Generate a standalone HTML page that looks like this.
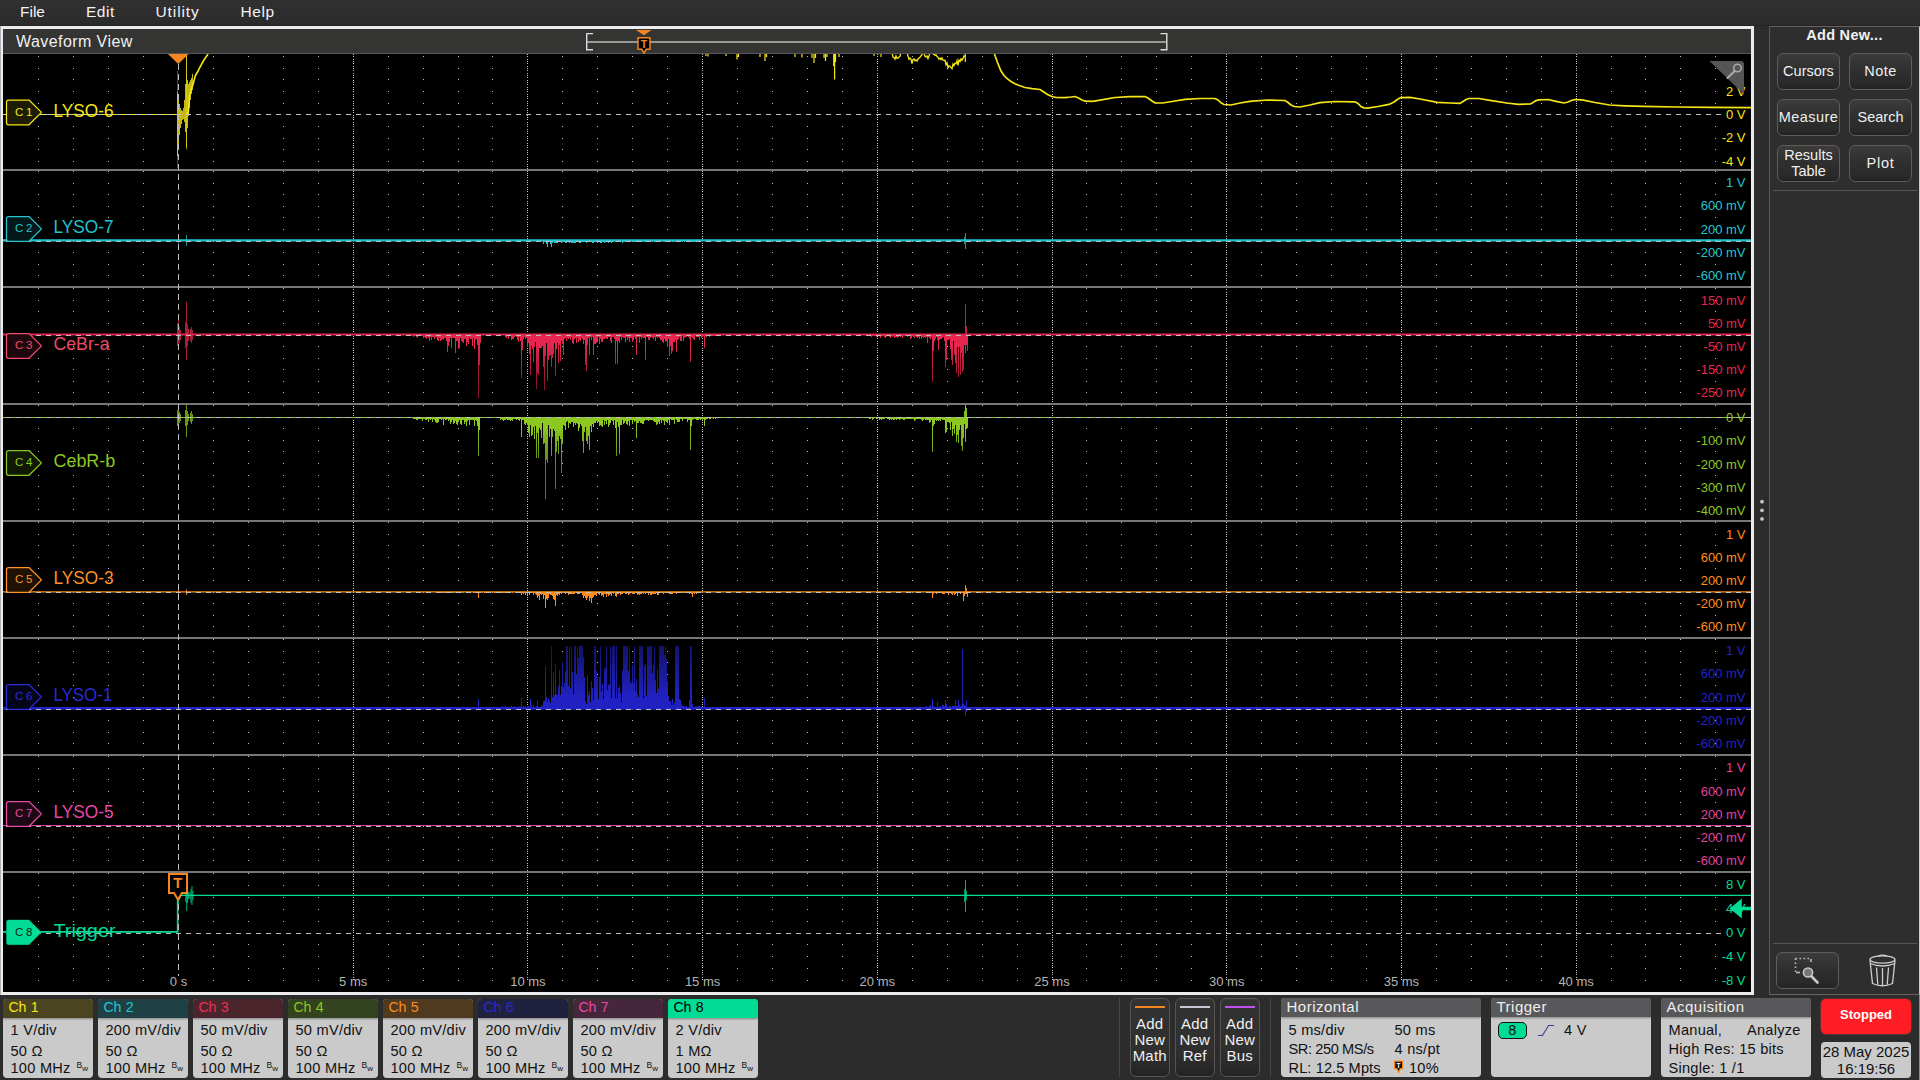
<!DOCTYPE html>
<html><head><meta charset="utf-8"><title>Waveform View</title>
<style>
html,body{margin:0;padding:0}
body{width:1920px;height:1080px;overflow:hidden;background:#2c2c2c;font-family:"Liberation Sans",sans-serif;position:relative;color:#eee}
.abs{position:absolute}
#menubar{left:0;top:0;width:1920px;height:26px;background:linear-gradient(#303030,#2b2b2b);border-bottom:1px solid #242424;box-sizing:border-box}
#menubar span{position:absolute;top:2.5px;font-size:15.5px;color:#f2f2f2;letter-spacing:.4px}
#wvframe{left:0;top:26px;width:1754px;height:969px;background:#ececee;border-left:1px solid #aeb0b6;box-sizing:border-box}
#wvtitle{left:3px;top:29px;width:1748px;height:25px;background:#343433;border-bottom:1px solid #58585a;box-sizing:border-box}
#wvtitle span{position:absolute;left:13px;top:3.5px;font-size:16px;color:#f0f0f0;letter-spacing:.43px}
#plot{left:3px;top:54px;width:1748px;height:938px;background:#000}
#side{left:1769px;top:26px;width:151px;height:969px;background:#2e2e2e;border:1px solid #6a625c;border-left-color:#5a5856;border-right-color:#cfcbc8;box-sizing:border-box}
.btn{position:absolute;box-sizing:border-box;border:1px solid #625b56;border-radius:6px;background:linear-gradient(#3c3c3c 0%,#2f2f2f 45%,#2a2a2a 85%,#222 100%);color:#f0f0f0;font-size:14.5px;text-align:center;letter-spacing:0}
.sep{position:absolute;left:1773px;width:144px;height:1px;background:#5a5450}
.chb{position:absolute;top:999px;width:90px;height:78.5px;background:#cacaca;border-radius:4px;overflow:hidden;color:#111;font-size:14.6px;letter-spacing:.25px}
.chh{position:absolute;left:0;top:0;width:90px;height:18.5px;box-sizing:border-box;padding-left:5.5px;font-size:14.2px;line-height:17px;letter-spacing:-.35px;word-spacing:1.3px;box-shadow:0 1px 2px rgba(0,0,0,.35)}
.r{position:absolute;left:7.5px;white-space:nowrap;line-height:16px}
.r1{top:23.2px}.r2{top:43.5px}.r3{top:61px}
.bw{position:absolute;left:73.5px;top:60.5px;font-size:8.5px;line-height:10px;letter-spacing:0}
.bw span{position:relative;top:3px;font-size:8px}
.pan{position:absolute;top:998px;height:79px;background:#cacaca;border-radius:4px;overflow:hidden;color:#111;font-size:14.6px;letter-spacing:.25px}
.ph{position:absolute;left:0;top:0;right:0;height:18.5px;background:#58585a;color:#eee;padding-left:5.5px;line-height:18px;font-size:15px;letter-spacing:.5px;box-shadow:0 1px 2px rgba(0,0,0,.35)}
.pan .t{position:absolute;white-space:nowrap;line-height:16px}
.addb{position:absolute;top:998px;width:39.5px;height:78.5px;box-sizing:border-box;border:1px solid #5a5450;border-radius:6px;background:linear-gradient(#333 0%,#2e2e2e 75%,#242424 100%);color:#f0f0f0;font-size:15px;line-height:16px;text-align:center;padding-top:17px;letter-spacing:.2px}
.addb i{position:absolute;left:4px;right:4px;top:7px;height:2px;display:block}
.vsep{position:absolute;top:998px;width:1px;height:79px;background:#4a4643}
</style></head><body>
<div id="menubar" class="abs"><span style="left:20px;letter-spacing:0">File</span><span style="left:86px;letter-spacing:.5px">Edit</span><span style="left:155.5px;letter-spacing:.9px">Utility</span><span style="left:240.5px;letter-spacing:.6px">Help</span></div>
<div id="wvframe" class="abs"></div>
<div id="wvtitle" class="abs"><span>Waveform View</span></div>
<div id="plot" class="abs"></div>
<svg class="abs" style="left:0;top:0" width="1920" height="1080" viewBox="0 0 1920 1080">
<g id="ruler" fill="none" stroke="#ddd" stroke-width="1.4"><path d="M593 33.6H586.7V49.8H593M1160.5 33.6H1166.8V49.8H1160.5"/><path d="M587 42H1166.5" stroke="#bbb" stroke-width="1.6"/></g>
<polygon points="636,30 651.5,30 643.8,35.3" fill="#f5861f"/>
<path d="M638 37.8H650V49.2H646.3L644 53.2L641.7 49.2H638Z" fill="#000" stroke="#f5861f" stroke-width="1.5" stroke-linejoin="round"/>
<text x="644" y="47.6" font-family="Liberation Sans, sans-serif" font-size="10.5" font-weight="bold" fill="#f5861f" text-anchor="middle">T</text>
<clipPath id="pc"><rect x="3" y="54" width="1748" height="938"/></clipPath>
<g clip-path="url(#pc)">
<defs><linearGradient id="g0" gradientUnits="userSpaceOnUse" x1="0" y1="241" x2="0" y2="251"><stop offset="0" stop-color="#22c5d0"/><stop offset="0.18" stop-color="#22c5d0"/><stop offset="1" stop-color="#22c5d0"/></linearGradient><linearGradient id="g1" gradientUnits="userSpaceOnUse" x1="0" y1="335" x2="0" y2="387"><stop offset="0" stop-color="#e8254e"/><stop offset="0.18" stop-color="#e8254e"/><stop offset="1" stop-color="#8a1430"/></linearGradient><linearGradient id="g2" gradientUnits="userSpaceOnUse" x1="0" y1="335" x2="0" y2="387"><stop offset="0" stop-color="#e8254e"/><stop offset="0.18" stop-color="#e8254e"/><stop offset="1" stop-color="#8a1430"/></linearGradient><linearGradient id="g3" gradientUnits="userSpaceOnUse" x1="0" y1="418" x2="0" y2="470"><stop offset="0" stop-color="#8cc820"/><stop offset="0.18" stop-color="#8cc820"/><stop offset="1" stop-color="#55800f"/></linearGradient><linearGradient id="g4" gradientUnits="userSpaceOnUse" x1="0" y1="418" x2="0" y2="470"><stop offset="0" stop-color="#8cc820"/><stop offset="0.18" stop-color="#8cc820"/><stop offset="1" stop-color="#55800f"/></linearGradient><linearGradient id="g5" gradientUnits="userSpaceOnUse" x1="0" y1="592" x2="0" y2="612"><stop offset="0" stop-color="#ff8c1e"/><stop offset="0.18" stop-color="#ff8c1e"/><stop offset="1" stop-color="#ff8c1e"/></linearGradient><linearGradient id="g6" gradientUnits="userSpaceOnUse" x1="0" y1="592" x2="0" y2="612"><stop offset="0" stop-color="#ff8c1e"/><stop offset="0.18" stop-color="#ff8c1e"/><stop offset="1" stop-color="#ff8c1e"/></linearGradient><linearGradient id="g7" gradientUnits="userSpaceOnUse" x1="0" y1="708" x2="0" y2="645"><stop offset="0" stop-color="#2121c2"/><stop offset="0.18" stop-color="#2121c2"/><stop offset="1" stop-color="#121268"/></linearGradient><linearGradient id="g8" gradientUnits="userSpaceOnUse" x1="0" y1="708" x2="0" y2="656"><stop offset="0" stop-color="#2323cc"/><stop offset="0.18" stop-color="#2323cc"/><stop offset="1" stop-color="#2323cc"/></linearGradient></defs>
<path d="M38 56.5h1m34 0h1m34 0h1m34 0h1m69 0h1m34 0h1m34 0h1m34 0h1m69 0h1m34 0h1m34 0h1m33 0h1m69 0h1m34 0h1m34 0h1m34 0h1m69 0h1m34 0h1m34 0h1m34 0h1m69 0h1m34 0h1m34 0h1m34 0h1m68 0h1m34 0h1m34 0h1m34 0h1m69 0h1m34 0h1m34 0h1m34 0h1m69 0h1m34 0h1m34 0h1m34 0h1m69 0h1m33 0h1m34 0h1m34 0h1M38 68.5h1m34 0h1m34 0h1m34 0h1m69 0h1m34 0h1m34 0h1m34 0h1m69 0h1m34 0h1m34 0h1m33 0h1m69 0h1m34 0h1m34 0h1m34 0h1m69 0h1m34 0h1m34 0h1m34 0h1m69 0h1m34 0h1m34 0h1m34 0h1m68 0h1m34 0h1m34 0h1m34 0h1m69 0h1m34 0h1m34 0h1m34 0h1m69 0h1m34 0h1m34 0h1m34 0h1m69 0h1m33 0h1m34 0h1m34 0h1M38 79.5h1m34 0h1m34 0h1m34 0h1m69 0h1m34 0h1m34 0h1m34 0h1m69 0h1m34 0h1m34 0h1m33 0h1m69 0h1m34 0h1m34 0h1m34 0h1m69 0h1m34 0h1m34 0h1m34 0h1m69 0h1m34 0h1m34 0h1m34 0h1m68 0h1m34 0h1m34 0h1m34 0h1m69 0h1m34 0h1m34 0h1m34 0h1m69 0h1m34 0h1m34 0h1m34 0h1m69 0h1m33 0h1m34 0h1m34 0h1M38 91.5h1m34 0h1m34 0h1m34 0h1m69 0h1m34 0h1m34 0h1m34 0h1m69 0h1m34 0h1m34 0h1m33 0h1m69 0h1m34 0h1m34 0h1m34 0h1m69 0h1m34 0h1m34 0h1m34 0h1m69 0h1m34 0h1m34 0h1m34 0h1m68 0h1m34 0h1m34 0h1m34 0h1m69 0h1m34 0h1m34 0h1m34 0h1m69 0h1m34 0h1m34 0h1m34 0h1m69 0h1m33 0h1m34 0h1m34 0h1M38 103.5h1m34 0h1m34 0h1m34 0h1m69 0h1m34 0h1m34 0h1m34 0h1m69 0h1m34 0h1m34 0h1m33 0h1m69 0h1m34 0h1m34 0h1m34 0h1m69 0h1m34 0h1m34 0h1m34 0h1m69 0h1m34 0h1m34 0h1m34 0h1m68 0h1m34 0h1m34 0h1m34 0h1m69 0h1m34 0h1m34 0h1m34 0h1m69 0h1m34 0h1m34 0h1m34 0h1m69 0h1m33 0h1m34 0h1m34 0h1M38 126.5h1m34 0h1m34 0h1m34 0h1m69 0h1m34 0h1m34 0h1m34 0h1m69 0h1m34 0h1m34 0h1m33 0h1m69 0h1m34 0h1m34 0h1m34 0h1m69 0h1m34 0h1m34 0h1m34 0h1m69 0h1m34 0h1m34 0h1m34 0h1m68 0h1m34 0h1m34 0h1m34 0h1m69 0h1m34 0h1m34 0h1m34 0h1m69 0h1m34 0h1m34 0h1m34 0h1m69 0h1m33 0h1m34 0h1m34 0h1M38 138.5h1m34 0h1m34 0h1m34 0h1m69 0h1m34 0h1m34 0h1m34 0h1m69 0h1m34 0h1m34 0h1m33 0h1m69 0h1m34 0h1m34 0h1m34 0h1m69 0h1m34 0h1m34 0h1m34 0h1m69 0h1m34 0h1m34 0h1m34 0h1m68 0h1m34 0h1m34 0h1m34 0h1m69 0h1m34 0h1m34 0h1m34 0h1m69 0h1m34 0h1m34 0h1m34 0h1m69 0h1m33 0h1m34 0h1m34 0h1M38 149.5h1m34 0h1m34 0h1m34 0h1m69 0h1m34 0h1m34 0h1m34 0h1m69 0h1m34 0h1m34 0h1m33 0h1m69 0h1m34 0h1m34 0h1m34 0h1m69 0h1m34 0h1m34 0h1m34 0h1m69 0h1m34 0h1m34 0h1m34 0h1m68 0h1m34 0h1m34 0h1m34 0h1m69 0h1m34 0h1m34 0h1m34 0h1m69 0h1m34 0h1m34 0h1m34 0h1m69 0h1m33 0h1m34 0h1m34 0h1M38 161.5h1m34 0h1m34 0h1m34 0h1m69 0h1m34 0h1m34 0h1m34 0h1m69 0h1m34 0h1m34 0h1m33 0h1m69 0h1m34 0h1m34 0h1m34 0h1m69 0h1m34 0h1m34 0h1m34 0h1m69 0h1m34 0h1m34 0h1m34 0h1m68 0h1m34 0h1m34 0h1m34 0h1m69 0h1m34 0h1m34 0h1m34 0h1m69 0h1m34 0h1m34 0h1m34 0h1m69 0h1m33 0h1m34 0h1m34 0h1M38 171.5h1m34 0h1m34 0h1m34 0h1m69 0h1m34 0h1m34 0h1m34 0h1m69 0h1m34 0h1m34 0h1m33 0h1m69 0h1m34 0h1m34 0h1m34 0h1m69 0h1m34 0h1m34 0h1m34 0h1m69 0h1m34 0h1m34 0h1m34 0h1m68 0h1m34 0h1m34 0h1m34 0h1m69 0h1m34 0h1m34 0h1m34 0h1m69 0h1m34 0h1m34 0h1m34 0h1m69 0h1m33 0h1m34 0h1m34 0h1M38 183.5h1m34 0h1m34 0h1m34 0h1m69 0h1m34 0h1m34 0h1m34 0h1m69 0h1m34 0h1m34 0h1m33 0h1m69 0h1m34 0h1m34 0h1m34 0h1m69 0h1m34 0h1m34 0h1m34 0h1m69 0h1m34 0h1m34 0h1m34 0h1m68 0h1m34 0h1m34 0h1m34 0h1m69 0h1m34 0h1m34 0h1m34 0h1m69 0h1m34 0h1m34 0h1m34 0h1m69 0h1m33 0h1m34 0h1m34 0h1M38 194.5h1m34 0h1m34 0h1m34 0h1m69 0h1m34 0h1m34 0h1m34 0h1m69 0h1m34 0h1m34 0h1m33 0h1m69 0h1m34 0h1m34 0h1m34 0h1m69 0h1m34 0h1m34 0h1m34 0h1m69 0h1m34 0h1m34 0h1m34 0h1m68 0h1m34 0h1m34 0h1m34 0h1m69 0h1m34 0h1m34 0h1m34 0h1m69 0h1m34 0h1m34 0h1m34 0h1m69 0h1m33 0h1m34 0h1m34 0h1M38 206.5h1m34 0h1m34 0h1m34 0h1m69 0h1m34 0h1m34 0h1m34 0h1m69 0h1m34 0h1m34 0h1m33 0h1m69 0h1m34 0h1m34 0h1m34 0h1m69 0h1m34 0h1m34 0h1m34 0h1m69 0h1m34 0h1m34 0h1m34 0h1m68 0h1m34 0h1m34 0h1m34 0h1m69 0h1m34 0h1m34 0h1m34 0h1m69 0h1m34 0h1m34 0h1m34 0h1m69 0h1m33 0h1m34 0h1m34 0h1M38 217.5h1m34 0h1m34 0h1m34 0h1m69 0h1m34 0h1m34 0h1m34 0h1m69 0h1m34 0h1m34 0h1m33 0h1m69 0h1m34 0h1m34 0h1m34 0h1m69 0h1m34 0h1m34 0h1m34 0h1m69 0h1m34 0h1m34 0h1m34 0h1m68 0h1m34 0h1m34 0h1m34 0h1m69 0h1m34 0h1m34 0h1m34 0h1m69 0h1m34 0h1m34 0h1m34 0h1m69 0h1m33 0h1m34 0h1m34 0h1M38 229.5h1m34 0h1m34 0h1m34 0h1m69 0h1m34 0h1m34 0h1m34 0h1m69 0h1m34 0h1m34 0h1m33 0h1m69 0h1m34 0h1m34 0h1m34 0h1m69 0h1m34 0h1m34 0h1m34 0h1m69 0h1m34 0h1m34 0h1m34 0h1m68 0h1m34 0h1m34 0h1m34 0h1m69 0h1m34 0h1m34 0h1m34 0h1m69 0h1m34 0h1m34 0h1m34 0h1m69 0h1m33 0h1m34 0h1m34 0h1M38 241.5h1m34 0h1m34 0h1m34 0h1m69 0h1m34 0h1m34 0h1m34 0h1m69 0h1m34 0h1m34 0h1m33 0h1m69 0h1m34 0h1m34 0h1m34 0h1m69 0h1m34 0h1m34 0h1m34 0h1m69 0h1m34 0h1m34 0h1m34 0h1m68 0h1m34 0h1m34 0h1m34 0h1m69 0h1m34 0h1m34 0h1m34 0h1m69 0h1m34 0h1m34 0h1m34 0h1m69 0h1m33 0h1m34 0h1m34 0h1M38 252.5h1m34 0h1m34 0h1m34 0h1m69 0h1m34 0h1m34 0h1m34 0h1m69 0h1m34 0h1m34 0h1m33 0h1m69 0h1m34 0h1m34 0h1m34 0h1m69 0h1m34 0h1m34 0h1m34 0h1m69 0h1m34 0h1m34 0h1m34 0h1m68 0h1m34 0h1m34 0h1m34 0h1m69 0h1m34 0h1m34 0h1m34 0h1m69 0h1m34 0h1m34 0h1m34 0h1m69 0h1m33 0h1m34 0h1m34 0h1M38 264.5h1m34 0h1m34 0h1m34 0h1m69 0h1m34 0h1m34 0h1m34 0h1m69 0h1m34 0h1m34 0h1m33 0h1m69 0h1m34 0h1m34 0h1m34 0h1m69 0h1m34 0h1m34 0h1m34 0h1m69 0h1m34 0h1m34 0h1m34 0h1m68 0h1m34 0h1m34 0h1m34 0h1m69 0h1m34 0h1m34 0h1m34 0h1m69 0h1m34 0h1m34 0h1m34 0h1m69 0h1m33 0h1m34 0h1m34 0h1M38 275.5h1m34 0h1m34 0h1m34 0h1m69 0h1m34 0h1m34 0h1m34 0h1m69 0h1m34 0h1m34 0h1m33 0h1m69 0h1m34 0h1m34 0h1m34 0h1m69 0h1m34 0h1m34 0h1m34 0h1m69 0h1m34 0h1m34 0h1m34 0h1m68 0h1m34 0h1m34 0h1m34 0h1m69 0h1m34 0h1m34 0h1m34 0h1m69 0h1m34 0h1m34 0h1m34 0h1m69 0h1m33 0h1m34 0h1m34 0h1M38 288.5h1m34 0h1m34 0h1m34 0h1m69 0h1m34 0h1m34 0h1m34 0h1m69 0h1m34 0h1m34 0h1m33 0h1m69 0h1m34 0h1m34 0h1m34 0h1m69 0h1m34 0h1m34 0h1m34 0h1m69 0h1m34 0h1m34 0h1m34 0h1m68 0h1m34 0h1m34 0h1m34 0h1m69 0h1m34 0h1m34 0h1m34 0h1m69 0h1m34 0h1m34 0h1m34 0h1m69 0h1m33 0h1m34 0h1m34 0h1M38 300.5h1m34 0h1m34 0h1m34 0h1m69 0h1m34 0h1m34 0h1m34 0h1m69 0h1m34 0h1m34 0h1m33 0h1m69 0h1m34 0h1m34 0h1m34 0h1m69 0h1m34 0h1m34 0h1m34 0h1m69 0h1m34 0h1m34 0h1m34 0h1m68 0h1m34 0h1m34 0h1m34 0h1m69 0h1m34 0h1m34 0h1m34 0h1m69 0h1m34 0h1m34 0h1m34 0h1m69 0h1m33 0h1m34 0h1m34 0h1M38 311.5h1m34 0h1m34 0h1m34 0h1m69 0h1m34 0h1m34 0h1m34 0h1m69 0h1m34 0h1m34 0h1m33 0h1m69 0h1m34 0h1m34 0h1m34 0h1m69 0h1m34 0h1m34 0h1m34 0h1m69 0h1m34 0h1m34 0h1m34 0h1m68 0h1m34 0h1m34 0h1m34 0h1m69 0h1m34 0h1m34 0h1m34 0h1m69 0h1m34 0h1m34 0h1m34 0h1m69 0h1m33 0h1m34 0h1m34 0h1M38 323.5h1m34 0h1m34 0h1m34 0h1m69 0h1m34 0h1m34 0h1m34 0h1m69 0h1m34 0h1m34 0h1m33 0h1m69 0h1m34 0h1m34 0h1m34 0h1m69 0h1m34 0h1m34 0h1m34 0h1m69 0h1m34 0h1m34 0h1m34 0h1m68 0h1m34 0h1m34 0h1m34 0h1m69 0h1m34 0h1m34 0h1m34 0h1m69 0h1m34 0h1m34 0h1m34 0h1m69 0h1m33 0h1m34 0h1m34 0h1M38 334.5h1m34 0h1m34 0h1m34 0h1m69 0h1m34 0h1m34 0h1m34 0h1m69 0h1m34 0h1m34 0h1m33 0h1m69 0h1m34 0h1m34 0h1m34 0h1m69 0h1m34 0h1m34 0h1m34 0h1m69 0h1m34 0h1m34 0h1m34 0h1m68 0h1m34 0h1m34 0h1m34 0h1m69 0h1m34 0h1m34 0h1m34 0h1m69 0h1m34 0h1m34 0h1m34 0h1m69 0h1m33 0h1m34 0h1m34 0h1M38 346.5h1m34 0h1m34 0h1m34 0h1m69 0h1m34 0h1m34 0h1m34 0h1m69 0h1m34 0h1m34 0h1m33 0h1m69 0h1m34 0h1m34 0h1m34 0h1m69 0h1m34 0h1m34 0h1m34 0h1m69 0h1m34 0h1m34 0h1m34 0h1m68 0h1m34 0h1m34 0h1m34 0h1m69 0h1m34 0h1m34 0h1m34 0h1m69 0h1m34 0h1m34 0h1m34 0h1m69 0h1m33 0h1m34 0h1m34 0h1M38 358.5h1m34 0h1m34 0h1m34 0h1m69 0h1m34 0h1m34 0h1m34 0h1m69 0h1m34 0h1m34 0h1m33 0h1m69 0h1m34 0h1m34 0h1m34 0h1m69 0h1m34 0h1m34 0h1m34 0h1m69 0h1m34 0h1m34 0h1m34 0h1m68 0h1m34 0h1m34 0h1m34 0h1m69 0h1m34 0h1m34 0h1m34 0h1m69 0h1m34 0h1m34 0h1m34 0h1m69 0h1m33 0h1m34 0h1m34 0h1M38 369.5h1m34 0h1m34 0h1m34 0h1m69 0h1m34 0h1m34 0h1m34 0h1m69 0h1m34 0h1m34 0h1m33 0h1m69 0h1m34 0h1m34 0h1m34 0h1m69 0h1m34 0h1m34 0h1m34 0h1m69 0h1m34 0h1m34 0h1m34 0h1m68 0h1m34 0h1m34 0h1m34 0h1m69 0h1m34 0h1m34 0h1m34 0h1m69 0h1m34 0h1m34 0h1m34 0h1m69 0h1m33 0h1m34 0h1m34 0h1M38 381.5h1m34 0h1m34 0h1m34 0h1m69 0h1m34 0h1m34 0h1m34 0h1m69 0h1m34 0h1m34 0h1m33 0h1m69 0h1m34 0h1m34 0h1m34 0h1m69 0h1m34 0h1m34 0h1m34 0h1m69 0h1m34 0h1m34 0h1m34 0h1m68 0h1m34 0h1m34 0h1m34 0h1m69 0h1m34 0h1m34 0h1m34 0h1m69 0h1m34 0h1m34 0h1m34 0h1m69 0h1m33 0h1m34 0h1m34 0h1M38 392.5h1m34 0h1m34 0h1m34 0h1m69 0h1m34 0h1m34 0h1m34 0h1m69 0h1m34 0h1m34 0h1m33 0h1m69 0h1m34 0h1m34 0h1m34 0h1m69 0h1m34 0h1m34 0h1m34 0h1m69 0h1m34 0h1m34 0h1m34 0h1m68 0h1m34 0h1m34 0h1m34 0h1m69 0h1m34 0h1m34 0h1m34 0h1m69 0h1m34 0h1m34 0h1m34 0h1m69 0h1m33 0h1m34 0h1m34 0h1M38 405.5h1m34 0h1m34 0h1m34 0h1m69 0h1m34 0h1m34 0h1m34 0h1m69 0h1m34 0h1m34 0h1m33 0h1m69 0h1m34 0h1m34 0h1m34 0h1m69 0h1m34 0h1m34 0h1m34 0h1m69 0h1m34 0h1m34 0h1m34 0h1m68 0h1m34 0h1m34 0h1m34 0h1m69 0h1m34 0h1m34 0h1m34 0h1m69 0h1m34 0h1m34 0h1m34 0h1m69 0h1m33 0h1m34 0h1m34 0h1M38 417.5h1m34 0h1m34 0h1m34 0h1m69 0h1m34 0h1m34 0h1m34 0h1m69 0h1m34 0h1m34 0h1m33 0h1m69 0h1m34 0h1m34 0h1m34 0h1m69 0h1m34 0h1m34 0h1m34 0h1m69 0h1m34 0h1m34 0h1m34 0h1m68 0h1m34 0h1m34 0h1m34 0h1m69 0h1m34 0h1m34 0h1m34 0h1m69 0h1m34 0h1m34 0h1m34 0h1m69 0h1m33 0h1m34 0h1m34 0h1M38 428.5h1m34 0h1m34 0h1m34 0h1m69 0h1m34 0h1m34 0h1m34 0h1m69 0h1m34 0h1m34 0h1m33 0h1m69 0h1m34 0h1m34 0h1m34 0h1m69 0h1m34 0h1m34 0h1m34 0h1m69 0h1m34 0h1m34 0h1m34 0h1m68 0h1m34 0h1m34 0h1m34 0h1m69 0h1m34 0h1m34 0h1m34 0h1m69 0h1m34 0h1m34 0h1m34 0h1m69 0h1m33 0h1m34 0h1m34 0h1M38 440.5h1m34 0h1m34 0h1m34 0h1m69 0h1m34 0h1m34 0h1m34 0h1m69 0h1m34 0h1m34 0h1m33 0h1m69 0h1m34 0h1m34 0h1m34 0h1m69 0h1m34 0h1m34 0h1m34 0h1m69 0h1m34 0h1m34 0h1m34 0h1m68 0h1m34 0h1m34 0h1m34 0h1m69 0h1m34 0h1m34 0h1m34 0h1m69 0h1m34 0h1m34 0h1m34 0h1m69 0h1m33 0h1m34 0h1m34 0h1M38 451.5h1m34 0h1m34 0h1m34 0h1m69 0h1m34 0h1m34 0h1m34 0h1m69 0h1m34 0h1m34 0h1m33 0h1m69 0h1m34 0h1m34 0h1m34 0h1m69 0h1m34 0h1m34 0h1m34 0h1m69 0h1m34 0h1m34 0h1m34 0h1m68 0h1m34 0h1m34 0h1m34 0h1m69 0h1m34 0h1m34 0h1m34 0h1m69 0h1m34 0h1m34 0h1m34 0h1m69 0h1m33 0h1m34 0h1m34 0h1M38 463.5h1m34 0h1m34 0h1m34 0h1m69 0h1m34 0h1m34 0h1m34 0h1m69 0h1m34 0h1m34 0h1m33 0h1m69 0h1m34 0h1m34 0h1m34 0h1m69 0h1m34 0h1m34 0h1m34 0h1m69 0h1m34 0h1m34 0h1m34 0h1m68 0h1m34 0h1m34 0h1m34 0h1m69 0h1m34 0h1m34 0h1m34 0h1m69 0h1m34 0h1m34 0h1m34 0h1m69 0h1m33 0h1m34 0h1m34 0h1M38 475.5h1m34 0h1m34 0h1m34 0h1m69 0h1m34 0h1m34 0h1m34 0h1m69 0h1m34 0h1m34 0h1m33 0h1m69 0h1m34 0h1m34 0h1m34 0h1m69 0h1m34 0h1m34 0h1m34 0h1m69 0h1m34 0h1m34 0h1m34 0h1m68 0h1m34 0h1m34 0h1m34 0h1m69 0h1m34 0h1m34 0h1m34 0h1m69 0h1m34 0h1m34 0h1m34 0h1m69 0h1m33 0h1m34 0h1m34 0h1M38 486.5h1m34 0h1m34 0h1m34 0h1m69 0h1m34 0h1m34 0h1m34 0h1m69 0h1m34 0h1m34 0h1m33 0h1m69 0h1m34 0h1m34 0h1m34 0h1m69 0h1m34 0h1m34 0h1m34 0h1m69 0h1m34 0h1m34 0h1m34 0h1m68 0h1m34 0h1m34 0h1m34 0h1m69 0h1m34 0h1m34 0h1m34 0h1m69 0h1m34 0h1m34 0h1m34 0h1m69 0h1m33 0h1m34 0h1m34 0h1M38 498.5h1m34 0h1m34 0h1m34 0h1m69 0h1m34 0h1m34 0h1m34 0h1m69 0h1m34 0h1m34 0h1m33 0h1m69 0h1m34 0h1m34 0h1m34 0h1m69 0h1m34 0h1m34 0h1m34 0h1m69 0h1m34 0h1m34 0h1m34 0h1m68 0h1m34 0h1m34 0h1m34 0h1m69 0h1m34 0h1m34 0h1m34 0h1m69 0h1m34 0h1m34 0h1m34 0h1m69 0h1m33 0h1m34 0h1m34 0h1M38 509.5h1m34 0h1m34 0h1m34 0h1m69 0h1m34 0h1m34 0h1m34 0h1m69 0h1m34 0h1m34 0h1m33 0h1m69 0h1m34 0h1m34 0h1m34 0h1m69 0h1m34 0h1m34 0h1m34 0h1m69 0h1m34 0h1m34 0h1m34 0h1m68 0h1m34 0h1m34 0h1m34 0h1m69 0h1m34 0h1m34 0h1m34 0h1m69 0h1m34 0h1m34 0h1m34 0h1m69 0h1m33 0h1m34 0h1m34 0h1M38 522.5h1m34 0h1m34 0h1m34 0h1m69 0h1m34 0h1m34 0h1m34 0h1m69 0h1m34 0h1m34 0h1m33 0h1m69 0h1m34 0h1m34 0h1m34 0h1m69 0h1m34 0h1m34 0h1m34 0h1m69 0h1m34 0h1m34 0h1m34 0h1m68 0h1m34 0h1m34 0h1m34 0h1m69 0h1m34 0h1m34 0h1m34 0h1m69 0h1m34 0h1m34 0h1m34 0h1m69 0h1m33 0h1m34 0h1m34 0h1M38 534.5h1m34 0h1m34 0h1m34 0h1m69 0h1m34 0h1m34 0h1m34 0h1m69 0h1m34 0h1m34 0h1m33 0h1m69 0h1m34 0h1m34 0h1m34 0h1m69 0h1m34 0h1m34 0h1m34 0h1m69 0h1m34 0h1m34 0h1m34 0h1m68 0h1m34 0h1m34 0h1m34 0h1m69 0h1m34 0h1m34 0h1m34 0h1m69 0h1m34 0h1m34 0h1m34 0h1m69 0h1m33 0h1m34 0h1m34 0h1M38 545.5h1m34 0h1m34 0h1m34 0h1m69 0h1m34 0h1m34 0h1m34 0h1m69 0h1m34 0h1m34 0h1m33 0h1m69 0h1m34 0h1m34 0h1m34 0h1m69 0h1m34 0h1m34 0h1m34 0h1m69 0h1m34 0h1m34 0h1m34 0h1m68 0h1m34 0h1m34 0h1m34 0h1m69 0h1m34 0h1m34 0h1m34 0h1m69 0h1m34 0h1m34 0h1m34 0h1m69 0h1m33 0h1m34 0h1m34 0h1M38 557.5h1m34 0h1m34 0h1m34 0h1m69 0h1m34 0h1m34 0h1m34 0h1m69 0h1m34 0h1m34 0h1m33 0h1m69 0h1m34 0h1m34 0h1m34 0h1m69 0h1m34 0h1m34 0h1m34 0h1m69 0h1m34 0h1m34 0h1m34 0h1m68 0h1m34 0h1m34 0h1m34 0h1m69 0h1m34 0h1m34 0h1m34 0h1m69 0h1m34 0h1m34 0h1m34 0h1m69 0h1m33 0h1m34 0h1m34 0h1M38 568.5h1m34 0h1m34 0h1m34 0h1m69 0h1m34 0h1m34 0h1m34 0h1m69 0h1m34 0h1m34 0h1m33 0h1m69 0h1m34 0h1m34 0h1m34 0h1m69 0h1m34 0h1m34 0h1m34 0h1m69 0h1m34 0h1m34 0h1m34 0h1m68 0h1m34 0h1m34 0h1m34 0h1m69 0h1m34 0h1m34 0h1m34 0h1m69 0h1m34 0h1m34 0h1m34 0h1m69 0h1m33 0h1m34 0h1m34 0h1M38 580.5h1m34 0h1m34 0h1m34 0h1m69 0h1m34 0h1m34 0h1m34 0h1m69 0h1m34 0h1m34 0h1m33 0h1m69 0h1m34 0h1m34 0h1m34 0h1m69 0h1m34 0h1m34 0h1m34 0h1m69 0h1m34 0h1m34 0h1m34 0h1m68 0h1m34 0h1m34 0h1m34 0h1m69 0h1m34 0h1m34 0h1m34 0h1m69 0h1m34 0h1m34 0h1m34 0h1m69 0h1m33 0h1m34 0h1m34 0h1M38 592.5h1m34 0h1m34 0h1m34 0h1m69 0h1m34 0h1m34 0h1m34 0h1m69 0h1m34 0h1m34 0h1m33 0h1m69 0h1m34 0h1m34 0h1m34 0h1m69 0h1m34 0h1m34 0h1m34 0h1m69 0h1m34 0h1m34 0h1m34 0h1m68 0h1m34 0h1m34 0h1m34 0h1m69 0h1m34 0h1m34 0h1m34 0h1m69 0h1m34 0h1m34 0h1m34 0h1m69 0h1m33 0h1m34 0h1m34 0h1M38 603.5h1m34 0h1m34 0h1m34 0h1m69 0h1m34 0h1m34 0h1m34 0h1m69 0h1m34 0h1m34 0h1m33 0h1m69 0h1m34 0h1m34 0h1m34 0h1m69 0h1m34 0h1m34 0h1m34 0h1m69 0h1m34 0h1m34 0h1m34 0h1m68 0h1m34 0h1m34 0h1m34 0h1m69 0h1m34 0h1m34 0h1m34 0h1m69 0h1m34 0h1m34 0h1m34 0h1m69 0h1m33 0h1m34 0h1m34 0h1M38 615.5h1m34 0h1m34 0h1m34 0h1m69 0h1m34 0h1m34 0h1m34 0h1m69 0h1m34 0h1m34 0h1m33 0h1m69 0h1m34 0h1m34 0h1m34 0h1m69 0h1m34 0h1m34 0h1m34 0h1m69 0h1m34 0h1m34 0h1m34 0h1m68 0h1m34 0h1m34 0h1m34 0h1m69 0h1m34 0h1m34 0h1m34 0h1m69 0h1m34 0h1m34 0h1m34 0h1m69 0h1m33 0h1m34 0h1m34 0h1M38 626.5h1m34 0h1m34 0h1m34 0h1m69 0h1m34 0h1m34 0h1m34 0h1m69 0h1m34 0h1m34 0h1m33 0h1m69 0h1m34 0h1m34 0h1m34 0h1m69 0h1m34 0h1m34 0h1m34 0h1m69 0h1m34 0h1m34 0h1m34 0h1m68 0h1m34 0h1m34 0h1m34 0h1m69 0h1m34 0h1m34 0h1m34 0h1m69 0h1m34 0h1m34 0h1m34 0h1m69 0h1m33 0h1m34 0h1m34 0h1M38 639.5h1m34 0h1m34 0h1m34 0h1m69 0h1m34 0h1m34 0h1m34 0h1m69 0h1m34 0h1m34 0h1m33 0h1m69 0h1m34 0h1m34 0h1m34 0h1m69 0h1m34 0h1m34 0h1m34 0h1m69 0h1m34 0h1m34 0h1m34 0h1m68 0h1m34 0h1m34 0h1m34 0h1m69 0h1m34 0h1m34 0h1m34 0h1m69 0h1m34 0h1m34 0h1m34 0h1m69 0h1m33 0h1m34 0h1m34 0h1M38 651.5h1m34 0h1m34 0h1m34 0h1m69 0h1m34 0h1m34 0h1m34 0h1m69 0h1m34 0h1m34 0h1m33 0h1m69 0h1m34 0h1m34 0h1m34 0h1m69 0h1m34 0h1m34 0h1m34 0h1m69 0h1m34 0h1m34 0h1m34 0h1m68 0h1m34 0h1m34 0h1m34 0h1m69 0h1m34 0h1m34 0h1m34 0h1m69 0h1m34 0h1m34 0h1m34 0h1m69 0h1m33 0h1m34 0h1m34 0h1M38 662.5h1m34 0h1m34 0h1m34 0h1m69 0h1m34 0h1m34 0h1m34 0h1m69 0h1m34 0h1m34 0h1m33 0h1m69 0h1m34 0h1m34 0h1m34 0h1m69 0h1m34 0h1m34 0h1m34 0h1m69 0h1m34 0h1m34 0h1m34 0h1m68 0h1m34 0h1m34 0h1m34 0h1m69 0h1m34 0h1m34 0h1m34 0h1m69 0h1m34 0h1m34 0h1m34 0h1m69 0h1m33 0h1m34 0h1m34 0h1M38 674.5h1m34 0h1m34 0h1m34 0h1m69 0h1m34 0h1m34 0h1m34 0h1m69 0h1m34 0h1m34 0h1m33 0h1m69 0h1m34 0h1m34 0h1m34 0h1m69 0h1m34 0h1m34 0h1m34 0h1m69 0h1m34 0h1m34 0h1m34 0h1m68 0h1m34 0h1m34 0h1m34 0h1m69 0h1m34 0h1m34 0h1m34 0h1m69 0h1m34 0h1m34 0h1m34 0h1m69 0h1m33 0h1m34 0h1m34 0h1M38 685.5h1m34 0h1m34 0h1m34 0h1m69 0h1m34 0h1m34 0h1m34 0h1m69 0h1m34 0h1m34 0h1m33 0h1m69 0h1m34 0h1m34 0h1m34 0h1m69 0h1m34 0h1m34 0h1m34 0h1m69 0h1m34 0h1m34 0h1m34 0h1m68 0h1m34 0h1m34 0h1m34 0h1m69 0h1m34 0h1m34 0h1m34 0h1m69 0h1m34 0h1m34 0h1m34 0h1m69 0h1m33 0h1m34 0h1m34 0h1M38 697.5h1m34 0h1m34 0h1m34 0h1m69 0h1m34 0h1m34 0h1m34 0h1m69 0h1m34 0h1m34 0h1m33 0h1m69 0h1m34 0h1m34 0h1m34 0h1m69 0h1m34 0h1m34 0h1m34 0h1m69 0h1m34 0h1m34 0h1m34 0h1m68 0h1m34 0h1m34 0h1m34 0h1m69 0h1m34 0h1m34 0h1m34 0h1m69 0h1m34 0h1m34 0h1m34 0h1m69 0h1m33 0h1m34 0h1m34 0h1M38 709.5h1m34 0h1m34 0h1m34 0h1m69 0h1m34 0h1m34 0h1m34 0h1m69 0h1m34 0h1m34 0h1m33 0h1m69 0h1m34 0h1m34 0h1m34 0h1m69 0h1m34 0h1m34 0h1m34 0h1m69 0h1m34 0h1m34 0h1m34 0h1m68 0h1m34 0h1m34 0h1m34 0h1m69 0h1m34 0h1m34 0h1m34 0h1m69 0h1m34 0h1m34 0h1m34 0h1m69 0h1m33 0h1m34 0h1m34 0h1M38 720.5h1m34 0h1m34 0h1m34 0h1m69 0h1m34 0h1m34 0h1m34 0h1m69 0h1m34 0h1m34 0h1m33 0h1m69 0h1m34 0h1m34 0h1m34 0h1m69 0h1m34 0h1m34 0h1m34 0h1m69 0h1m34 0h1m34 0h1m34 0h1m68 0h1m34 0h1m34 0h1m34 0h1m69 0h1m34 0h1m34 0h1m34 0h1m69 0h1m34 0h1m34 0h1m34 0h1m69 0h1m33 0h1m34 0h1m34 0h1M38 732.5h1m34 0h1m34 0h1m34 0h1m69 0h1m34 0h1m34 0h1m34 0h1m69 0h1m34 0h1m34 0h1m33 0h1m69 0h1m34 0h1m34 0h1m34 0h1m69 0h1m34 0h1m34 0h1m34 0h1m69 0h1m34 0h1m34 0h1m34 0h1m68 0h1m34 0h1m34 0h1m34 0h1m69 0h1m34 0h1m34 0h1m34 0h1m69 0h1m34 0h1m34 0h1m34 0h1m69 0h1m33 0h1m34 0h1m34 0h1M38 743.5h1m34 0h1m34 0h1m34 0h1m69 0h1m34 0h1m34 0h1m34 0h1m69 0h1m34 0h1m34 0h1m33 0h1m69 0h1m34 0h1m34 0h1m34 0h1m69 0h1m34 0h1m34 0h1m34 0h1m69 0h1m34 0h1m34 0h1m34 0h1m68 0h1m34 0h1m34 0h1m34 0h1m69 0h1m34 0h1m34 0h1m34 0h1m69 0h1m34 0h1m34 0h1m34 0h1m69 0h1m33 0h1m34 0h1m34 0h1M38 756.5h1m34 0h1m34 0h1m34 0h1m69 0h1m34 0h1m34 0h1m34 0h1m69 0h1m34 0h1m34 0h1m33 0h1m69 0h1m34 0h1m34 0h1m34 0h1m69 0h1m34 0h1m34 0h1m34 0h1m69 0h1m34 0h1m34 0h1m34 0h1m68 0h1m34 0h1m34 0h1m34 0h1m69 0h1m34 0h1m34 0h1m34 0h1m69 0h1m34 0h1m34 0h1m34 0h1m69 0h1m33 0h1m34 0h1m34 0h1M38 768.5h1m34 0h1m34 0h1m34 0h1m69 0h1m34 0h1m34 0h1m34 0h1m69 0h1m34 0h1m34 0h1m33 0h1m69 0h1m34 0h1m34 0h1m34 0h1m69 0h1m34 0h1m34 0h1m34 0h1m69 0h1m34 0h1m34 0h1m34 0h1m68 0h1m34 0h1m34 0h1m34 0h1m69 0h1m34 0h1m34 0h1m34 0h1m69 0h1m34 0h1m34 0h1m34 0h1m69 0h1m33 0h1m34 0h1m34 0h1M38 779.5h1m34 0h1m34 0h1m34 0h1m69 0h1m34 0h1m34 0h1m34 0h1m69 0h1m34 0h1m34 0h1m33 0h1m69 0h1m34 0h1m34 0h1m34 0h1m69 0h1m34 0h1m34 0h1m34 0h1m69 0h1m34 0h1m34 0h1m34 0h1m68 0h1m34 0h1m34 0h1m34 0h1m69 0h1m34 0h1m34 0h1m34 0h1m69 0h1m34 0h1m34 0h1m34 0h1m69 0h1m33 0h1m34 0h1m34 0h1M38 791.5h1m34 0h1m34 0h1m34 0h1m69 0h1m34 0h1m34 0h1m34 0h1m69 0h1m34 0h1m34 0h1m33 0h1m69 0h1m34 0h1m34 0h1m34 0h1m69 0h1m34 0h1m34 0h1m34 0h1m69 0h1m34 0h1m34 0h1m34 0h1m68 0h1m34 0h1m34 0h1m34 0h1m69 0h1m34 0h1m34 0h1m34 0h1m69 0h1m34 0h1m34 0h1m34 0h1m69 0h1m33 0h1m34 0h1m34 0h1M38 802.5h1m34 0h1m34 0h1m34 0h1m69 0h1m34 0h1m34 0h1m34 0h1m69 0h1m34 0h1m34 0h1m33 0h1m69 0h1m34 0h1m34 0h1m34 0h1m69 0h1m34 0h1m34 0h1m34 0h1m69 0h1m34 0h1m34 0h1m34 0h1m68 0h1m34 0h1m34 0h1m34 0h1m69 0h1m34 0h1m34 0h1m34 0h1m69 0h1m34 0h1m34 0h1m34 0h1m69 0h1m33 0h1m34 0h1m34 0h1M38 814.5h1m34 0h1m34 0h1m34 0h1m69 0h1m34 0h1m34 0h1m34 0h1m69 0h1m34 0h1m34 0h1m33 0h1m69 0h1m34 0h1m34 0h1m34 0h1m69 0h1m34 0h1m34 0h1m34 0h1m69 0h1m34 0h1m34 0h1m34 0h1m68 0h1m34 0h1m34 0h1m34 0h1m69 0h1m34 0h1m34 0h1m34 0h1m69 0h1m34 0h1m34 0h1m34 0h1m69 0h1m33 0h1m34 0h1m34 0h1M38 826.5h1m34 0h1m34 0h1m34 0h1m69 0h1m34 0h1m34 0h1m34 0h1m69 0h1m34 0h1m34 0h1m33 0h1m69 0h1m34 0h1m34 0h1m34 0h1m69 0h1m34 0h1m34 0h1m34 0h1m69 0h1m34 0h1m34 0h1m34 0h1m68 0h1m34 0h1m34 0h1m34 0h1m69 0h1m34 0h1m34 0h1m34 0h1m69 0h1m34 0h1m34 0h1m34 0h1m69 0h1m33 0h1m34 0h1m34 0h1M38 837.5h1m34 0h1m34 0h1m34 0h1m69 0h1m34 0h1m34 0h1m34 0h1m69 0h1m34 0h1m34 0h1m33 0h1m69 0h1m34 0h1m34 0h1m34 0h1m69 0h1m34 0h1m34 0h1m34 0h1m69 0h1m34 0h1m34 0h1m34 0h1m68 0h1m34 0h1m34 0h1m34 0h1m69 0h1m34 0h1m34 0h1m34 0h1m69 0h1m34 0h1m34 0h1m34 0h1m69 0h1m33 0h1m34 0h1m34 0h1M38 849.5h1m34 0h1m34 0h1m34 0h1m69 0h1m34 0h1m34 0h1m34 0h1m69 0h1m34 0h1m34 0h1m33 0h1m69 0h1m34 0h1m34 0h1m34 0h1m69 0h1m34 0h1m34 0h1m34 0h1m69 0h1m34 0h1m34 0h1m34 0h1m68 0h1m34 0h1m34 0h1m34 0h1m69 0h1m34 0h1m34 0h1m34 0h1m69 0h1m34 0h1m34 0h1m34 0h1m69 0h1m33 0h1m34 0h1m34 0h1M38 860.5h1m34 0h1m34 0h1m34 0h1m69 0h1m34 0h1m34 0h1m34 0h1m69 0h1m34 0h1m34 0h1m33 0h1m69 0h1m34 0h1m34 0h1m34 0h1m69 0h1m34 0h1m34 0h1m34 0h1m69 0h1m34 0h1m34 0h1m34 0h1m68 0h1m34 0h1m34 0h1m34 0h1m69 0h1m34 0h1m34 0h1m34 0h1m69 0h1m34 0h1m34 0h1m34 0h1m69 0h1m33 0h1m34 0h1m34 0h1M38 873.5h1m34 0h1m34 0h1m34 0h1m69 0h1m34 0h1m34 0h1m34 0h1m69 0h1m34 0h1m34 0h1m33 0h1m69 0h1m34 0h1m34 0h1m34 0h1m69 0h1m34 0h1m34 0h1m34 0h1m69 0h1m34 0h1m34 0h1m34 0h1m68 0h1m34 0h1m34 0h1m34 0h1m69 0h1m34 0h1m34 0h1m34 0h1m69 0h1m34 0h1m34 0h1m34 0h1m69 0h1m33 0h1m34 0h1m34 0h1M38 885.5h1m34 0h1m34 0h1m34 0h1m69 0h1m34 0h1m34 0h1m34 0h1m69 0h1m34 0h1m34 0h1m33 0h1m69 0h1m34 0h1m34 0h1m34 0h1m69 0h1m34 0h1m34 0h1m34 0h1m69 0h1m34 0h1m34 0h1m34 0h1m68 0h1m34 0h1m34 0h1m34 0h1m69 0h1m34 0h1m34 0h1m34 0h1m69 0h1m34 0h1m34 0h1m34 0h1m69 0h1m33 0h1m34 0h1m34 0h1M38 897.5h1m34 0h1m34 0h1m34 0h1m69 0h1m34 0h1m34 0h1m34 0h1m69 0h1m34 0h1m34 0h1m33 0h1m69 0h1m34 0h1m34 0h1m34 0h1m69 0h1m34 0h1m34 0h1m34 0h1m69 0h1m34 0h1m34 0h1m34 0h1m68 0h1m34 0h1m34 0h1m34 0h1m69 0h1m34 0h1m34 0h1m34 0h1m69 0h1m34 0h1m34 0h1m34 0h1m69 0h1m33 0h1m34 0h1m34 0h1M38 909.5h1m34 0h1m34 0h1m34 0h1m69 0h1m34 0h1m34 0h1m34 0h1m69 0h1m34 0h1m34 0h1m33 0h1m69 0h1m34 0h1m34 0h1m34 0h1m69 0h1m34 0h1m34 0h1m34 0h1m69 0h1m34 0h1m34 0h1m34 0h1m68 0h1m34 0h1m34 0h1m34 0h1m69 0h1m34 0h1m34 0h1m34 0h1m69 0h1m34 0h1m34 0h1m34 0h1m69 0h1m33 0h1m34 0h1m34 0h1M38 921.5h1m34 0h1m34 0h1m34 0h1m69 0h1m34 0h1m34 0h1m34 0h1m69 0h1m34 0h1m34 0h1m33 0h1m69 0h1m34 0h1m34 0h1m34 0h1m69 0h1m34 0h1m34 0h1m34 0h1m69 0h1m34 0h1m34 0h1m34 0h1m68 0h1m34 0h1m34 0h1m34 0h1m69 0h1m34 0h1m34 0h1m34 0h1m69 0h1m34 0h1m34 0h1m34 0h1m69 0h1m33 0h1m34 0h1m34 0h1M38 944.5h1m34 0h1m34 0h1m34 0h1m69 0h1m34 0h1m34 0h1m34 0h1m69 0h1m34 0h1m34 0h1m33 0h1m69 0h1m34 0h1m34 0h1m34 0h1m69 0h1m34 0h1m34 0h1m34 0h1m69 0h1m34 0h1m34 0h1m34 0h1m68 0h1m34 0h1m34 0h1m34 0h1m69 0h1m34 0h1m34 0h1m34 0h1m69 0h1m34 0h1m34 0h1m34 0h1m69 0h1m33 0h1m34 0h1m34 0h1M38 956.5h1m34 0h1m34 0h1m34 0h1m69 0h1m34 0h1m34 0h1m34 0h1m69 0h1m34 0h1m34 0h1m33 0h1m69 0h1m34 0h1m34 0h1m34 0h1m69 0h1m34 0h1m34 0h1m34 0h1m69 0h1m34 0h1m34 0h1m34 0h1m68 0h1m34 0h1m34 0h1m34 0h1m69 0h1m34 0h1m34 0h1m34 0h1m69 0h1m34 0h1m34 0h1m34 0h1m69 0h1m33 0h1m34 0h1m34 0h1M38 968.5h1m34 0h1m34 0h1m34 0h1m69 0h1m34 0h1m34 0h1m34 0h1m69 0h1m34 0h1m34 0h1m33 0h1m69 0h1m34 0h1m34 0h1m34 0h1m69 0h1m34 0h1m34 0h1m34 0h1m69 0h1m34 0h1m34 0h1m34 0h1m68 0h1m34 0h1m34 0h1m34 0h1m69 0h1m34 0h1m34 0h1m34 0h1m69 0h1m34 0h1m34 0h1m34 0h1m69 0h1m33 0h1m34 0h1m34 0h1M38 980.5h1m34 0h1m34 0h1m34 0h1m69 0h1m34 0h1m34 0h1m34 0h1m69 0h1m34 0h1m34 0h1m33 0h1m69 0h1m34 0h1m34 0h1m34 0h1m69 0h1m34 0h1m34 0h1m34 0h1m69 0h1m34 0h1m34 0h1m34 0h1m68 0h1m34 0h1m34 0h1m34 0h1m69 0h1m34 0h1m34 0h1m34 0h1m69 0h1m34 0h1m34 0h1m34 0h1m69 0h1m33 0h1m34 0h1m34 0h1" stroke="#bdbdbd" stroke-width="1" fill="none" shape-rendering="crispEdges"/>
<line x1="353.5" y1="54" x2="353.5" y2="981" stroke="#c8c8c8" stroke-width="1" stroke-dasharray="1 1.33" shape-rendering="crispEdges"/>
<line x1="527.5" y1="54" x2="527.5" y2="981" stroke="#c8c8c8" stroke-width="1" stroke-dasharray="1 1.33" shape-rendering="crispEdges"/>
<line x1="702.5" y1="54" x2="702.5" y2="981" stroke="#c8c8c8" stroke-width="1" stroke-dasharray="1 1.33" shape-rendering="crispEdges"/>
<line x1="877.5" y1="54" x2="877.5" y2="981" stroke="#c8c8c8" stroke-width="1" stroke-dasharray="1 1.33" shape-rendering="crispEdges"/>
<line x1="1052.5" y1="54" x2="1052.5" y2="981" stroke="#c8c8c8" stroke-width="1" stroke-dasharray="1 1.33" shape-rendering="crispEdges"/>
<line x1="1226.5" y1="54" x2="1226.5" y2="981" stroke="#c8c8c8" stroke-width="1" stroke-dasharray="1 1.33" shape-rendering="crispEdges"/>
<line x1="1401.5" y1="54" x2="1401.5" y2="981" stroke="#c8c8c8" stroke-width="1" stroke-dasharray="1 1.33" shape-rendering="crispEdges"/>
<line x1="1576.5" y1="54" x2="1576.5" y2="981" stroke="#c8c8c8" stroke-width="1" stroke-dasharray="1 1.33" shape-rendering="crispEdges"/>
<rect x="3" y="169" width="1748" height="2" fill="#777"/>
<rect x="3" y="286" width="1748" height="2" fill="#777"/>
<rect x="3" y="403" width="1748" height="2" fill="#777"/>
<rect x="3" y="520" width="1748" height="2" fill="#777"/>
<rect x="3" y="637" width="1748" height="2" fill="#777"/>
<rect x="3" y="754" width="1748" height="2" fill="#777"/>
<rect x="3" y="871" width="1748" height="2" fill="#777"/>
<line x1="3" y1="114.5" x2="178" y2="114.5" stroke="#f5e616" stroke-width="1.2"/>
<path d="M177.5 92V156M178.5 98V150M179.5 104V135M180.5 108V128M181.5 110V124M182.5 111V120M183.5 108V119M184.5 100V122M185.5 84V132M186.5 54V148M187.5 80V128M188.5 84V116M189.5 82V108M190.5 80V100M191.5 78V94M192.5 74V90" stroke="#f5e616" stroke-width="1.0" fill="none" opacity="0.8"/>
<path d="M177.5 71V168M186.5 54V150" stroke="#f5e616" stroke-width="1.0" fill="none" opacity="0.35"/>
<polyline points="186.5,114 188.3,112.5 189.4,96.3 191,90 192.9,84.7 195.2,76 197.5,72 199.9,67.4 203.3,61 208,54" fill="none" stroke="#f5e616" stroke-width="1.6"/>
<path d="M706 54V56M708 54V56.5M726 54V56M737 54V59.5M738.5 54V57M760 54V57M765 54V61M766.5 54V57M795 54V57M802 54V57.5M812 54V58M814 54V63M815.5 54V58M824 54V58M825.5 54V61M827 54V57M833.7 54V66M834.6 54V79.5M835.5 54V62M839 54V57M874 54V56M881 54V57" stroke="#f5e616" stroke-width="1.2" fill="none" opacity="1"/>
<polyline points="890,52 891,52 892,52 893,57.2 894,57.3 895,59.1 896,56 897,58.4 898,58.1 899,56.9 900,56.3 901,52 902,52 903,52 904,52 905,52 906,52 907,52 908,56.1 909,59.2 910,58.1 911,59.3 912,63.6 913,59.5 914,58.9 915,60.8 916,59.9 917,61.1 918,59.1 919,58 920,57.2 921,55.8 922,54.7 923,52 924,52 925,56.5 926,57 927,55.9 928,58.5 929,56.3 930,52 931,52 932,52 933,53.9 934,54.4 935,55.4 936,54.8 937,56.5 938,57.2 939,59.1 940,58 941,59.7 942,57.9 943,60.1 944,60.5 945,60.1 946,64.8 947,62.8 948,67.7 949,65.7 950,66.5 951,67.6 952,68.7 953,64 954,65.6 955,63.2 956,63.6 957,60.7 958,65.3 959,60 960,61.5 961,58.8 962,60.2 963,58.4 964,55.9 965,56.8" fill="none" stroke="#f5e616" stroke-width="1.3"/>
<path d="M965.3 54V62" stroke="#f5e616" stroke-width="1.2" fill="none" opacity="1"/>
<polyline points="994.5,54 995.5,57 997.5,62.5 1001,71 1004,75.5 1007.5,78.8 1011,81.5 1015,83.8 1020,85.8 1025,87.5 1032,88.7 1040,89.5 1043,91.5 1047.5,94.5 1052,96.5 1056,97.5 1065,97.6 1071,97 1075,96.5 1078,97.8 1082,100 1085,101.2 1092.5,101.3 1100,100.2 1115,97.5 1130,96.6 1145,96.5 1148,98 1152,101 1155,102.8 1162.5,103 1172,101.5 1185,99.3 1200,98.5 1215,98.5 1218,100 1221,102.8 1224,104.5 1231,105 1240,103 1250,101.3 1267.5,100 1285,100.5 1288,102.5 1291,105 1294,106.5 1300,107 1310,105 1320,102.6 1335,101.5 1355,101.8 1358,103.5 1361,106.5 1364,107.8 1367.5,108.2 1378,106.5 1389,104.4 1394,102 1398,99 1401,97.6 1410,97.4 1420,99 1437.4,102.4 1450,103 1460,103.4 1463,101.5 1466,99.5 1469,98.5 1479,98.5 1490,100.3 1506.7,103 1518.5,104.4 1530.4,104 1533,102.5 1536,100.6 1539,99.9 1548.2,99.5 1556,101.3 1564,103 1568,102 1572,100.3 1575,99.5 1582,99.9 1595,102.5 1609.6,105 1625,105.8 1643.2,106.4 1676.9,107 1710,107.4 1751,107.7" fill="none" stroke="#f5e616" stroke-width="1.7"/>
<line x1="3" y1="240.3" x2="1751" y2="240.3" stroke="#22c5d0" stroke-width="2.2"/>
<path d="M543.5 241V243.8M544.5 241V241.8M545.5 241V241.9M546.5 241V243.5M547.5 241V247M548.5 241V241.7M549.5 241V242.1M550.5 241V243.7M551.5 241V246.5M552.5 241V242.9M553.5 241V241.7M554.5 241V243M555.5 241V243.2M556.5 241V243.4M557.5 241V242.8M558.5 241V242M559.5 241V241.7M560.5 241V242M561.5 241V242.6M562.5 241V241.7M563.5 241V241.6M564.5 241V242M565.5 241V242.5M566.5 241V243.1M567.5 241V241.6M568.5 241V241.5M569.5 241V242.7M570.5 241V242.2M571.5 241V242.6M572.5 241V243.4M573.5 241V243.2M574.5 241V242.8M575.5 241V242.6M576.5 241V241.7M577.5 241V242.2M578.5 241V241.5M579.5 241V242.5M580.5 241V242.5M581.5 241V242.4M582.5 241V241.8M583.5 241V241.7M584.5 241V241.7M585.5 241V241.5M586.5 241V242.8M587.5 241V241.9M588.5 241V241.7M589.5 241V241.9M590.5 241V242.3M591.5 241V241.7M592.5 241V242.7M593.5 241V243M594.5 241V241.7M595.5 241V241.5M596.5 241V242.4M597.5 241V243.3M598.5 241V241.5M599.5 241V242.3M600.5 241V242.6M601.5 241V242.9M602.5 241V241.5M603.5 241V241.5M604.5 241V243.2M605.5 241V241.5M606.5 241V241.5M607.5 241V241.9M608.5 241V243.2M609.5 241V242.3M610.5 241V241.5M611.5 241V242.9M612.5 241V241.5M613.5 241V242.4M614.5 241V241.4M615.5 241V241.7M616.5 241V241.4M617.5 241V241.5M618.5 241V241.5M619.5 241V242.2M620.5 241V241.6M622.5 241V242.7M623.5 241V242.3M624.5 241V242.4M625.5 241V241.9M626.5 241V242M630.5 241V241.6M633.5 241V242.2M634.5 241V241.5M635.5 241V241.7M636.5 241V241.8M637.5 241V242M638.5 241V241.6M640.5 241V241.6M641.5 241V241.7M642.5 241V241.6M643.5 241V241.4M644.5 241V242M645.5 241V242.1M649.5 241V242.3M650.5 241V242.2M652.5 241V242.3M654.5 241V241.5M655.5 241V241.5M656.5 241V242.1M658.5 241V241.9M659.5 241V241.6M662.5 241V241.4M663.5 241V242M664.5 241V241.8M665.5 241V241.9M666.5 241V241.8M667.5 241V241.7M668.5 241V241.9M669.5 241V241.6M670.5 241V241.7M672.5 241V241.5M673.5 241V241.7M675.5 241V242M676.5 241V241.6M678.5 241V242M680.5 241V241.4M682.5 241V242M683.5 241V241.4M684.5 241V241.7M686.5 241V241.7M687.5 241V241.7M688.5 241V241.5M689.5 241V241.9M690.5 241V241.7M691.5 241V241.8M692.5 241V241.5M693.5 241V241.7M694.5 241V241.6M695.5 241V241.5M697.5 241V241.4M698.5 241V241.6M700.5 241V241.5" stroke="url(#g0)" stroke-width="1" fill="none" shape-rendering="crispEdges"/>
<path d="M965.5 233V249M964.5 237V244M186.5 235V246M178.5 237.5V243.5" stroke="#22c5d0" stroke-width="1.0" fill="none" opacity="0.75"/>
<line x1="3" y1="334.6" x2="1751" y2="334.6" stroke="#e8254e" stroke-width="2.0"/>
<path d="M412.5 335V335.5M413.5 335V336.9M414.5 335V335.7M415.5 335V336.1M416.5 335V336.9M417.5 335V337.5M418.5 335V336.2M419.5 335V336.2M420.5 335V336.4M421.5 335V336M422.5 335V336M423.5 335V338.2M424.5 335V337.3M425.5 335V338M426.5 335V339.2M427.5 335V336.5M428.5 335V337.9M429.5 335V341.3M430.5 335V336.8M431.5 335V339.8M432.5 335V337.2M433.5 335V337.1M434.5 335V339.1M435.5 335V336.9M436.5 335V336.9M437.5 335V340.2M438.5 335V341.1M439.5 335V337.5M440.5 335V340.8M441.5 335V340.1M442.5 335V338.7M443.5 335V340.3M444.5 335V337.9M445.5 335V338.4M446.5 335V340.8M447.5 335V352M448.5 335V345.8M449.5 335V342.4M450.5 335V337.7M451.5 335V347.7M452.5 335V338M453.5 335V338.2M454.5 335V338M455.5 335V353M456.5 335V340.9M457.5 335V341.4M458.5 335V349.1M459.5 335V348.2M460.5 335V337.9M461.5 335V340.6M462.5 335V341.7M463.5 335V343.4M464.5 335V339M465.5 335V339M466.5 335V345.7M467.5 335V341.7M468.5 335V344.1M469.5 335V338.2M470.5 335V338.5M471.5 335V339.3M472.5 335V346.2M473.5 335V338.3M474.5 335V349.4M475.5 335V340.3M476.5 335V338.7M477.5 335V344.5M478.5 335V398M479.5 335V365M480.5 335V343.2M505.5 335V337.1M506.5 335V337.5M507.5 335V336M508.5 335V339.1M509.5 335V336M510.5 335V336.3M511.5 335V339.5M512.5 335V339.1M513.5 335V339M514.5 335V337.1M515.5 335V336.4M516.5 335V337.3M517.5 335V340.2M518.5 335V341.8M519.5 335V336.7M520.5 335V340.8M521.5 335V378M522.5 335V350M523.5 335V338.7M524.5 335V337.1M525.5 335V338.6M526.5 335V337.6M527.5 335V347M528.5 335V343.3M529.5 335V353.9M530.5 335V375M531.5 335V346M532.5 335V349.2M533.5 335V362.1M534.5 335V346.6M535.5 335V341.8M536.5 335V389M537.5 335V373.1M538.5 335V375M539.5 335V348M540.5 335V348.1M541.5 335V347.9M542.5 335V346.2M543.5 335V366.9M544.5 335V390M545.5 335V356.2M546.5 335V343.1M547.5 335V381M548.5 335V360M549.5 335V356M550.5 335V355.1M551.5 335V367M552.5 335V358M553.5 335V354.2M554.5 335V342.9M555.5 335V376M556.5 335V348.6M557.5 335V342.8M558.5 335V363M559.5 335V344.9M560.5 335V361M561.5 335V340.8M562.5 335V343.9M563.5 335V355M564.5 335V338.6M565.5 335V337.8M566.5 335V341.4M567.5 335V337.9M568.5 335V338.7M569.5 335V337.5M570.5 335V340.4M571.5 335V337.2M572.5 335V343.4M573.5 335V344.3M574.5 335V338.6M575.5 335V338.4M576.5 335V342.6M577.5 335V338.4M578.5 335V341.8M579.5 335V340.1M580.5 335V340.7M581.5 335V337.6M582.5 335V339.4M583.5 335V343.5M584.5 335V340.3M585.5 335V365M586.5 335V371M587.5 335V345.4M588.5 335V337.6M589.5 335V355M590.5 335V337.4M591.5 335V339.5M592.5 335V336.9M593.5 335V355M594.5 335V343.8M595.5 335V344.1M596.5 335V342.7M597.5 335V341.5M598.5 335V337M599.5 335V343.9M600.5 335V338.5M601.5 335V342.3M602.5 335V342.4M603.5 335V339.3M604.5 335V338.5M605.5 335V338.1M606.5 335V338.5M607.5 335V338.9M608.5 335V336.9M609.5 335V336.9M610.5 335V341.2M611.5 335V342.9M612.5 335V336.9M613.5 335V336.8M614.5 335V339M615.5 335V364M616.5 335V341.4M617.5 335V364M618.5 335V341.4M619.5 335V343M620.5 335V337.4M621.5 335V339.6M622.5 335V337.2M623.5 335V337.6M624.5 335V338M625.5 335V342.4M626.5 335V337M627.5 335V340M628.5 335V337.6M629.5 335V342.1M630.5 335V337.6M631.5 335V338.2M632.5 335V341.9M633.5 335V339.5M634.5 335V336.8M635.5 335V338.6M636.5 335V355M637.5 335V336.7M638.5 335V337.1M639.5 335V342.9M640.5 335V336.5M641.5 335V338.8M642.5 335V336.7M643.5 335V337.5M644.5 335V338.1M645.5 335V360M646.5 335V337M647.5 335V337.4M648.5 335V340.3M649.5 335V340.2M650.5 335V338.2M651.5 335V336.6M652.5 335V338M653.5 335V338.6M654.5 335V337.4M655.5 335V340.9M656.5 335V337.2M657.5 335V337.8M658.5 335V336.6M659.5 335V338.2M660.5 335V339.8M661.5 335V339.5M662.5 335V341.9M663.5 335V342.5M664.5 335V339.4M665.5 335V342M666.5 335V340.8M667.5 335V347.4M668.5 335V339.1M669.5 335V356M670.5 335V346.2M671.5 335V354M672.5 335V350.5M673.5 335V341.7M674.5 335V341.7M675.5 335V339.9M676.5 335V352.4M677.5 335V340.2M678.5 335V338.7M679.5 335V337M680.5 335V340.9M681.5 335V340.9M682.5 335V336.3M683.5 335V341.3M684.5 335V337.9M685.5 335V337.1M686.5 335V337.3M687.5 335V336.2M688.5 335V337.4M689.5 335V339M690.5 335V362M691.5 335V336.5M692.5 335V337.6M693.5 335V339M694.5 335V339.9M695.5 335V336.4M696.5 335V337.3M697.5 335V337.3M698.5 335V336.5M699.5 335V339.8M700.5 335V335.7M701.5 335V337.5M702.5 335V336.6M703.5 335V336.3M704.5 335V348M705.5 335V335.9M706.5 335V337.2M707.5 335V335.5M708.5 335V335.5M709.5 335V336.5M710.5 335V335.7M711.5 335V335.5M712.5 335V335.8M713.5 335V335.5M714.5 335V335.7M715.5 335V336.1" stroke="url(#g1)" stroke-width="1" fill="none" shape-rendering="crispEdges"/>
<path d="M869.5 335V335.5M870.5 335V335.9M871.5 335V336.6M872.5 335V336.3M873.5 335V336.2M874.5 335V335.5M875.5 335V335.6M876.5 335V337.3M877.5 335V335.6M878.5 335V336.2M879.5 335V335.6M880.5 335V337.6M881.5 335V335.6M882.5 335V335.9M883.5 335V336.2M884.5 335V336.7M885.5 335V337.7M886.5 335V336.8M887.5 335V335.8M888.5 335V335.6M889.5 335V336.8M890.5 335V338M891.5 335V335.6M892.5 335V337.1M893.5 335V335.7M894.5 335V338.3M895.5 335V337M896.5 335V336.6M897.5 335V338.3M898.5 335V336.8M899.5 335V336M900.5 335V337M901.5 335V336.2M902.5 335V337.8M903.5 335V336M904.5 335V336.3M905.5 335V335.9M906.5 335V335.8M907.5 335V336.5M908.5 335V336.2M909.5 335V335.9M910.5 335V338.8M911.5 335V337.9M912.5 335V336.3M913.5 335V336.8M914.5 335V338.2M915.5 335V336.1M916.5 335V336.6M917.5 335V338.4M918.5 335V337M919.5 335V338.8M920.5 335V335.9M921.5 335V338.9M922.5 335V337.1M923.5 335V337.8M924.5 335V337M925.5 335V338.3M926.5 335V337M927.5 335V342.5M928.5 335V337.1M929.5 335V338.3M930.5 335V339.3M931.5 335V336.8M932.5 335V382M933.5 335V350.5M934.5 335V340.9M935.5 335V339.4M936.5 335V337.3M937.5 335V339.5M938.5 335V350M939.5 335V339.6M940.5 335V338.9M941.5 335V339.3M942.5 335V338.1M943.5 335V337.1M944.5 335V340.6M945.5 335V367M946.5 335V360M947.5 335V339.5M948.5 335V340.3M949.5 335V339M950.5 335V348.6M951.5 335V360.4M952.5 335V365M953.5 335V341.1M954.5 335V354.6M955.5 335V363.2M956.5 335V373M957.5 335V347M958.5 335V377M959.5 335V346.5M960.5 335V375M961.5 335V353.1M962.5 335V372M963.5 335V370.4M964.5 335V345.1M965.5 335V353.3M966.5 335V344.5M967.5 335V351.1" stroke="url(#g2)" stroke-width="1" fill="none" shape-rendering="crispEdges"/>
<path d="M965.5 304V336M966.5 326V336" stroke="#e8254e" stroke-width="1.0" fill="none" opacity="0.85"/>
<path d="M177.5 323V346M178.5 318V350M179.5 327V343M180.5 330V340M185.5 322V348M186.5 302V360M187.5 324V346M188.5 329V341M190.5 329V341M191.5 327V343M192.5 330V340" stroke="#e8254e" stroke-width="1.0" fill="none" opacity="0.75"/>
<line x1="3" y1="417.5" x2="1751" y2="417.5" stroke="#8cc820" stroke-width="1.0"/>
<path d="M412.5 418V418.4M413.5 418V418.5M414.5 418V418.8M415.5 418V419.2M416.5 418V420.3M417.5 418V419.9M418.5 418V418.8M419.5 418V418.9M420.5 418V418.9M421.5 418V418.7M422.5 418V421M423.5 418V418.7M424.5 418V418.8M425.5 418V419.9M426.5 418V419.7M427.5 418V419M428.5 418V421.7M429.5 418V419.3M430.5 418V420M431.5 418V418.9M432.5 418V421.9M433.5 418V419.1M434.5 418V419.5M435.5 418V422.2M436.5 418V422.9M437.5 418V422.6M438.5 418V422.1M439.5 418V419.3M440.5 418V419.4M441.5 418V420.3M442.5 418V419.4M443.5 418V424.5M444.5 418V419.4M445.5 418V419.8M446.5 418V419.6M447.5 418V419.4M448.5 418V420.7M449.5 418V419.5M450.5 418V424M451.5 418V421.9M452.5 418V420.1M453.5 418V423.5M454.5 418V423M455.5 418V421.1M456.5 418V423.6M457.5 418V424.6M458.5 418V421.6M459.5 418V420.1M460.5 418V424.4M461.5 418V425M462.5 418V420.1M463.5 418V419.6M464.5 418V424.1M465.5 418V422.1M466.5 418V426M467.5 418V421.3M468.5 418V420M469.5 418V425M470.5 418V420.2M471.5 418V419.8M472.5 418V419.7M473.5 418V420.2M474.5 418V426.2M475.5 418V419.9M476.5 418V420.8M477.5 418V426.1M478.5 418V456M479.5 418V429.7M500.5 418V420.4M501.5 418V418.7M502.5 418V420.1M503.5 418V420.6M504.5 418V419.9M505.5 418V420.1M506.5 418V418.6M507.5 418V419.9M508.5 418V420.2M509.5 418V420.4M510.5 418V421.2M511.5 418V420M512.5 418V421.4M513.5 418V418.9M514.5 418V419.4M515.5 418V418.8M516.5 418V419.9M517.5 418V419.3M518.5 418V420.3M519.5 418V420.7M520.5 418V419.4M521.5 418V437M522.5 418V419.7M523.5 418V419.9M524.5 418V423.6M525.5 418V424.6M526.5 418V423M527.5 418V424.7M528.5 418V433.4M529.5 418V436.6M530.5 418V425.1M531.5 418V435.6M532.5 418V434.8M533.5 418V426.8M534.5 418V439.2M535.5 418V425.5M536.5 418V458M537.5 418V433.1M538.5 418V458M539.5 418V428.1M540.5 418V429.8M541.5 418V437.5M542.5 418V423.4M543.5 418V443.8M544.5 418V442.7M545.5 418V499M546.5 418V459.9M547.5 418V463M548.5 418V425M549.5 418V436.8M550.5 418V429.1M551.5 418V456M552.5 418V437.1M553.5 418V428.5M554.5 418V430.5M555.5 418V489M556.5 418V451.6M557.5 418V440.7M558.5 418V454M559.5 418V435.8M560.5 418V439.2M561.5 418V473M562.5 418V444.3M563.5 418V425.2M564.5 418V425.6M565.5 418V430.4M566.5 418V422M567.5 418V421.1M568.5 418V427.7M569.5 418V422.8M570.5 418V424.4M571.5 418V421.7M572.5 418V422.2M573.5 418V427.4M574.5 418V423.2M575.5 418V424.8M576.5 418V422.7M577.5 418V424.2M578.5 418V430.6M579.5 418V428.4M580.5 418V423.8M581.5 418V426.2M582.5 418V441M583.5 418V452.8M584.5 418V431.5M585.5 418V426.7M586.5 418V441.4M587.5 418V444.2M588.5 418V435.8M589.5 418V449.9M590.5 418V425.6M591.5 418V432.4M592.5 418V424.1M593.5 418V426.7M594.5 418V422.9M595.5 418V422.5M596.5 418V420.9M597.5 418V423.4M598.5 418V422.1M599.5 418V426.3M600.5 418V425.1M601.5 418V425.5M602.5 418V426.5M603.5 418V420M604.5 418V425.1M605.5 418V421.3M606.5 418V424M607.5 418V420.4M608.5 418V426.8M609.5 418V424.8M610.5 418V422.9M611.5 418V420.3M612.5 418V421.4M613.5 418V425.1M614.5 418V420.3M615.5 418V427.6M616.5 418V456M617.5 418V421.8M618.5 418V426.5M619.5 418V454M620.5 418V425.3M621.5 418V425.3M622.5 418V420.1M623.5 418V423.5M624.5 418V422.7M625.5 418V420.6M626.5 418V423.8M627.5 418V425.4M628.5 418V421.1M629.5 418V425.6M630.5 418V420.1M631.5 418V419.9M632.5 418V423.5M633.5 418V420.2M634.5 418V421.8M635.5 418V421.1M636.5 418V438M637.5 418V423.3M638.5 418V423.1M639.5 418V421.2M640.5 418V422.8M641.5 418V423.2M642.5 418V424.4M643.5 418V423.9M644.5 418V420.7M645.5 418V420.1M646.5 418V420.4M647.5 418V419.6M648.5 418V420.7M649.5 418V419.7M650.5 418V419.6M651.5 418V420.1M652.5 418V419.5M653.5 418V420.5M654.5 418V422M655.5 418V421.6M656.5 418V425M657.5 418V423.9M658.5 418V421.5M659.5 418V424M660.5 418V420.3M661.5 418V422.9M662.5 418V419.8M663.5 418V421.2M664.5 418V424.9M665.5 418V421.2M666.5 418V421.9M667.5 418V422.7M668.5 418V419.8M669.5 418V424.6M670.5 418V419.4M671.5 418V419.6M672.5 418V419.5M673.5 418V419.8M674.5 418V424.2M675.5 418V419.4M676.5 418V419.7M677.5 418V421.7M678.5 418V421.8M679.5 418V422.4M680.5 418V419.2M681.5 418V418.9M682.5 418V421.1M683.5 418V418.8M684.5 418V418.8M685.5 418V418.9M686.5 418V419.4M687.5 418V421.5M688.5 418V420.3M689.5 418V419.6M690.5 418V450M691.5 418V426.1M692.5 418V419.8M693.5 418V419M694.5 418V418.7M695.5 418V418.8M696.5 418V420.3M697.5 418V419.7M698.5 418V420.3M699.5 418V418.7M700.5 418V420.1M701.5 418V418.7M702.5 418V420.1M703.5 418V419M704.5 418V426M705.5 418V419.6M706.5 418V419M707.5 418V419.1M708.5 418V418.4M709.5 418V418.9M710.5 418V418.5M713.5 418V418.6M714.5 418V418.4M715.5 418V419.1" stroke="url(#g3)" stroke-width="1" fill="none" shape-rendering="crispEdges"/>
<path d="M869.5 418V418.7M870.5 418V419M872.5 418V419.7M873.5 418V419.2M875.5 418V418.4M876.5 418V418.8M877.5 418V419.1M879.5 418V419.7M880.5 418V418.5M881.5 418V419.9M882.5 418V419.2M883.5 418V418.7M884.5 418V419.1M887.5 418V418.9M888.5 418V419.3M889.5 418V419.7M890.5 418V418.6M891.5 418V419.8M892.5 418V418.5M893.5 418V419.8M894.5 418V419.8M895.5 418V418.7M896.5 418V419.6M897.5 418V419.2M898.5 418V419.2M899.5 418V419.6M900.5 418V418.8M901.5 418V418.8M902.5 418V419.2M903.5 418V419.7M904.5 418V419.8M905.5 418V418.9M906.5 418V419.4M907.5 418V418.5M908.5 418V418.5M909.5 418V418.5M910.5 418V419M911.5 418V419.3M912.5 418V418.5M913.5 418V418.5M914.5 418V420.6M915.5 418V419.5M916.5 418V418.7M917.5 418V418.8M918.5 418V419.1M919.5 418V418.5M920.5 418V418.6M921.5 418V420.1M922.5 418V420.5M923.5 418V419.9M924.5 418V419M925.5 418V419.6M926.5 418V419.7M927.5 418V420.4M928.5 418V419.8M929.5 418V422.6M930.5 418V422.3M931.5 418V419.6M932.5 418V452M933.5 418V425.5M934.5 418V423.6M935.5 418V420.1M936.5 418V420.5M937.5 418V420.3M938.5 418V421.3M939.5 418V420.2M940.5 418V421.3M941.5 418V419.4M942.5 418V419.6M943.5 418V419.5M944.5 418V419.5M945.5 418V433M946.5 418V432M947.5 418V421.9M948.5 418V422.4M949.5 418V423M950.5 418V429.8M951.5 418V422.3M952.5 418V436M953.5 418V429.2M954.5 418V434.1M955.5 418V425.4M956.5 418V442M957.5 418V434.7M958.5 418V443M959.5 418V429.9M960.5 418V424.8M961.5 418V446M962.5 418V451M963.5 418V437.5M964.5 418V423.9M965.5 418V441.8M966.5 418V429.2M967.5 418V427.8" stroke="url(#g4)" stroke-width="1" fill="none" shape-rendering="crispEdges"/>
<path d="M965.5 405V419M966.5 408V419M964.5 411V419" stroke="#8cc820" stroke-width="1.0" fill="none" opacity="0.95"/>
<path d="M177.5 410V426M178.5 408V428M179.5 412V423M180.5 414V421M185.5 410V426M186.5 405V437M187.5 411V425M188.5 414V421M190.5 413V422M191.5 411V424M192.5 414V421" stroke="#8cc820" stroke-width="1.0" fill="none" opacity="0.75"/>
<line x1="3" y1="591.9" x2="1751" y2="591.9" stroke="#ff8c1e" stroke-width="1.2"/>
<path d="M441.5 592V592.8M442.5 592V592.7M443.5 592V592.6M444.5 592V593M445.5 592V592.5M446.5 592V593.1M447.5 592V592.5M449.5 592V592.4M451.5 592V592.5M452.5 592V592.9M453.5 592V592.8M455.5 592V592.8M456.5 592V592.9M457.5 592V592.7M458.5 592V592.5M459.5 592V592.9M460.5 592V592.7M461.5 592V593M463.5 592V593.1M470.5 592V592.6M472.5 592V592.4M473.5 592V593.1M474.5 592V592.6M475.5 592V593.2M476.5 592V592.8M477.5 592V593.2M478.5 592V597.5M479.5 592V592.5M480.5 592V593.2M481.5 592V592.4M482.5 592V593.2M484.5 592V592.5M485.5 592V593.1M487.5 592V592.5M488.5 592V593.2M489.5 592V592.4M490.5 592V593.3M494.5 592V592.5M495.5 592V592.5M496.5 592V593.1M497.5 592V593M498.5 592V592.4M500.5 592V592.6M501.5 592V592.9M502.5 592V592.5M503.5 592V592.7M504.5 592V592.7M505.5 592V592.7M507.5 592V593.4M508.5 592V592.4M509.5 592V593.3M510.5 592V592.5M512.5 592V592.8M515.5 592V592.5M516.5 592V592.5M517.5 592V592.6M518.5 592V592.5M521.5 592V595.2M522.5 592V592.7M523.5 592V594.1M524.5 592V593.2M525.5 592V595.2M526.5 592V593M527.5 592V595.2M528.5 592V593.4M529.5 592V595.3M530.5 592V593M531.5 592V592.8M532.5 592V592.8M533.5 592V595.3M534.5 592V593.1M535.5 592V593.6M536.5 592V595.4M537.5 592V597.7M538.5 592V595.5M539.5 592V599.7M540.5 592V594.4M541.5 592V595.1M542.5 592V593.6M543.5 592V599.4M544.5 592V594.7M545.5 592V608M546.5 592V598.5M547.5 592V599.9M548.5 592V597.7M549.5 592V593.9M550.5 592V594.6M551.5 592V595.1M552.5 592V595.6M553.5 592V598.6M554.5 592V599.8M555.5 592V606M556.5 592V595.2M557.5 592V595.6M558.5 592V593.7M559.5 592V595.2M560.5 592V592.8M561.5 592V593.8M562.5 592V593M563.5 592V593M564.5 592V593M565.5 592V594.1M566.5 592V592.8M567.5 592V592.8M568.5 592V594.5M569.5 592V594M570.5 592V594.2M571.5 592V594.2M572.5 592V594M573.5 592V593.5M574.5 592V594.3M575.5 592V592.8M576.5 592V592.9M577.5 592V594.3M578.5 592V593.8M579.5 592V593.5M580.5 592V592.9M581.5 592V593.2M582.5 592V594.8M583.5 592V597.6M584.5 592V595.6M585.5 592V597.8M586.5 592V599.6M587.5 592V597.6M588.5 592V595.5M589.5 592V600.6M590.5 592V598M591.5 592V602.7M592.5 592V597.7M593.5 592V596.6M594.5 592V594.8M595.5 592V595.1M596.5 592V596.1M597.5 592V593.1M598.5 592V593.9M599.5 592V594.5M600.5 592V593.2M601.5 592V595.7M602.5 592V595.2M603.5 592V596.9M604.5 592V593.6M605.5 592V593.9M606.5 592V596.7M607.5 592V593.7M608.5 592V596M609.5 592V594.5M610.5 592V593.5M611.5 592V595.5M612.5 592V593.2M613.5 592V593.7M614.5 592V593.2M615.5 592V596M616.5 592V597.3M617.5 592V594M618.5 592V594.1M619.5 592V593.1M620.5 592V595.4M621.5 592V593.6M622.5 592V594M623.5 592V593M624.5 592V592.8M625.5 592V593.5M626.5 592V594.1M627.5 592V593.3M628.5 592V595M629.5 592V593.6M630.5 592V592.9M631.5 592V592.8M632.5 592V594.1M633.5 592V593.8M634.5 592V594.3M635.5 592V593M636.5 592V593.3M637.5 592V595.2M638.5 592V593.5M639.5 592V594.8M640.5 592V593.9M641.5 592V593.6M642.5 592V593.4M643.5 592V594M644.5 592V593.4M645.5 592V594.2M646.5 592V592.8M647.5 592V593M648.5 592V595M649.5 592V593.1M650.5 592V594.8M651.5 592V595.4M652.5 592V593.6M653.5 592V594.3M654.5 592V594.4M655.5 592V594M656.5 592V592.9M657.5 592V594.9M658.5 592V595M659.5 592V592.8M660.5 592V592.5M661.5 592V592.6M662.5 592V593.3M663.5 592V593.9M664.5 592V592.5M665.5 592V592.5M666.5 592V593.3M667.5 592V592.8M668.5 592V592.8M669.5 592V593.8M670.5 592V594.2M671.5 592V594.4M672.5 592V593.6M673.5 592V592.5M674.5 592V592.5M675.5 592V593.1M676.5 592V594.3M677.5 592V592.5M678.5 592V592.9M679.5 592V592.7M680.5 592V592.7M681.5 592V592.8M682.5 592V592.6M683.5 592V592.8M684.5 592V592.5M685.5 592V592.9M686.5 592V592.8M687.5 592V593.3M688.5 592V593.1M689.5 592V594.1M690.5 592V593.4M691.5 592V593.8M692.5 592V596.5M693.5 592V593.1M694.5 592V593.5M695.5 592V593.4M696.5 592V593.5M697.5 592V593M698.5 592V592.4M699.5 592V592.8" stroke="url(#g5)" stroke-width="1" fill="none" shape-rendering="crispEdges"/>
<path d="M926.5 592V593.4M928.5 592V592.5M930.5 592V593M931.5 592V593.3M932.5 592V598M933.5 592V593.5M934.5 592V593.1M935.5 592V592.5M936.5 592V593.8M937.5 592V592.5M938.5 592V593.4M939.5 592V592.4M940.5 592V592.7M941.5 592V592.8M942.5 592V593.9M943.5 592V593.7M944.5 592V593.5M945.5 592V592.5M946.5 592V592.8M947.5 592V593.3M948.5 592V594.5M949.5 592V593.3M950.5 592V593.3M951.5 592V593.5M952.5 592V594.8M953.5 592V592.9M954.5 592V595.1M955.5 592V594.3M956.5 592V593.4M957.5 592V596.1M958.5 592V593.4M959.5 592V593M960.5 592V593.5M961.5 592V593M962.5 592V593M963.5 592V601M964.5 592V595.5M965.5 592V593.1M966.5 592V593.8M967.5 592V596.9" stroke="url(#g6)" stroke-width="1" fill="none" shape-rendering="crispEdges"/>
<path d="M965.5 585V594M966.5 588V594M178.5 590V594.5M186.5 589.5V595" stroke="#ff8c1e" stroke-width="1.0" fill="none" opacity="0.9"/>
<line x1="3" y1="708.3" x2="1751" y2="708.3" stroke="#2323cc" stroke-width="2.8"/>
<path d="M430.5 708V707.5M432.5 708V707.4M433.5 708V707M435.5 708V707.5M436.5 708V707.3M437.5 708V707.4M438.5 708V707.4M440.5 708V707.1M443.5 708V707.6M444.5 708V707.5M445.5 708V707.2M446.5 708V706.8M447.5 708V706.9M448.5 708V707.4M449.5 708V707.1M450.5 708V707.6M453.5 708V707.4M454.5 708V707.6M455.5 708V707.6M458.5 708V707.5M459.5 708V707.5M460.5 708V706.9M462.5 708V706.7M463.5 708V706.9M464.5 708V707.6M465.5 708V707.1M466.5 708V707.1M467.5 708V707.5M468.5 708V707M469.5 708V706.9M471.5 708V706.7M474.5 708V707.3M476.5 708V707.5M477.5 708V707.5M478.5 708V699M479.5 708V706.7M480.5 708V706.6M481.5 708V707.6M483.5 708V707.2M485.5 708V707.5M486.5 708V707M488.5 708V706.9M489.5 708V707M490.5 708V707.5M492.5 708V707.3M493.5 708V707.6M494.5 708V706.8M495.5 708V707.2M496.5 708V707.6M497.5 708V706.8M498.5 708V707.2M499.5 708V707M500.5 708V707.4M501.5 708V707.4M502.5 708V706.3M503.5 708V707.5M504.5 708V707.4M505.5 708V706.3M506.5 708V707.4M507.5 708V706.7M509.5 708V707.4M510.5 708V707.5M511.5 708V706.3M512.5 708V707.1M513.5 708V707.5M514.5 708V706.4M515.5 708V707.2M516.5 708V707.5M517.5 708V707.1M518.5 708V706M519.5 708V707.3M520.5 708V707.4M521.5 708V698M522.5 708V707.4M523.5 708V705.7M524.5 708V707.4M525.5 708V706.1M526.5 708V707.1M527.5 708V706M528.5 708V705.8M529.5 708V707.2M530.5 708V699M531.5 708V704.7M532.5 708V706.5M533.5 708V705.1M534.5 708V706.6M535.5 708V707.2M536.5 708V705.6M537.5 708V700M538.5 708V707.1M539.5 708V707.1M540.5 708V706.5M541.5 708V705.1M542.5 708V706.1M543.5 708V700.9M544.5 708V701.2M545.5 708V666M546.5 708V697.4M547.5 708V701.5M548.5 708V697.9M549.5 708V699.5M550.5 708V702.7M551.5 708V645.5M552.5 708V697.1M553.5 708V672M554.5 708V694.5M555.5 708V664M556.5 708V694M557.5 708V695M558.5 708V685.8M559.5 708V670M560.5 708V694.9M561.5 708V685.5M562.5 708V662.4M563.5 708V686.7M564.5 708V683.3M565.5 708V671.2M566.5 708V645.5M567.5 708V645.5M568.5 708V686M569.5 708V645.5M570.5 708V688.4M571.5 708V645.5M572.5 708V672M573.5 708V694.4M574.5 708V645.5M575.5 708V645.5M576.5 708V674.4M577.5 708V645.5M578.5 708V658M579.5 708V645.5M580.5 708V645.5M581.5 708V645.5M582.5 708V645.5M583.5 708V657M584.5 708V677.4M585.5 708V701.3M586.5 708V704.1M587.5 708V675M588.5 708V694.5M589.5 708V691.2M590.5 708V702M591.5 708V681M592.5 708V688.1M593.5 708V700.3M594.5 708V645.5M595.5 708V645.5M596.5 708V670.8M597.5 708V677.2M598.5 708V699.3M599.5 708V677M600.5 708V645.5M601.5 708V691.4M602.5 708V684M603.5 708V698.9M604.5 708V668.3M605.5 708V666.9M606.5 708V645.5M607.5 708V690.4M608.5 708V685.4M609.5 708V683.7M610.5 708V645.5M611.5 708V697.5M612.5 708V645.5M613.5 708V645.5M614.5 708V645.5M615.5 708V697.9M616.5 708V645.5M617.5 708V697.9M618.5 708V687.5M619.5 708V685.6M620.5 708V693.1M621.5 708V702.2M622.5 708V670.4M623.5 708V645.5M624.5 708V645.5M625.5 708V645.5M626.5 708V645.5M627.5 708V645.5M628.5 708V670.5M629.5 708V645.5M630.5 708V681.5M631.5 708V683.2M632.5 708V665.1M633.5 708V683.2M634.5 708V645.5M635.5 708V691M636.5 708V678.6M637.5 708V694.3M638.5 708V696.9M639.5 708V645.5M640.5 708V645.5M641.5 708V645.5M642.5 708V645.5M643.5 708V698.3M644.5 708V666.1M645.5 708V664.2M646.5 708V696.2M647.5 708V645.5M648.5 708V645.5M649.5 708V645.5M650.5 708V645.5M651.5 708V645.5M652.5 708V673.2M653.5 708V664.9M654.5 708V645.5M655.5 708V680.3M656.5 708V693.3M657.5 708V668.8M658.5 708V689M659.5 708V645.5M660.5 708V645.5M661.5 708V645.5M662.5 708V645.5M663.5 708V645.5M664.5 708V654.9M665.5 708V645.5M666.5 708V659.1M667.5 708V681.4M668.5 708V695.5M669.5 708V701.4M670.5 708V701.3M671.5 708V704.7M672.5 708V699.4M673.5 708V705.2M674.5 708V702.7M675.5 708V645.5M676.5 708V645.5M677.5 708V645.5M678.5 708V645.5M679.5 708V698.6M680.5 708V699.9M681.5 708V703.9M682.5 708V706.3M683.5 708V705.7M684.5 708V705.8M685.5 708V706.9M686.5 708V706.1M687.5 708V706.9M688.5 708V707M689.5 708V699.7M690.5 708V645.5M691.5 708V645.5M692.5 708V704M693.5 708V707.3M694.5 708V707.5M695.5 708V706.3M696.5 708V707.5M697.5 708V707.4M698.5 708V706.1M699.5 708V706.4M700.5 708V706.6M701.5 708V707.5M702.5 708V707.2M703.5 708V707.1M704.5 708V698M705.5 708V707.1" stroke="url(#g7)" stroke-width="1" fill="none" shape-rendering="crispEdges"/>
<path d="M892.5 708V707.5M896.5 708V707.3M899.5 708V707.6M900.5 708V707.4M901.5 708V707.4M902.5 708V707.5M904.5 708V707.1M905.5 708V707.6M908.5 708V707.2M909.5 708V707.2M910.5 708V707.5M911.5 708V707.2M912.5 708V707.4M913.5 708V706.8M914.5 708V707.4M915.5 708V707.1M916.5 708V706.9M917.5 708V707.1M918.5 708V707.5M919.5 708V707.5M920.5 708V707.2M921.5 708V706.8M922.5 708V706.5M925.5 708V706.7M926.5 708V706.1M927.5 708V707.4M928.5 708V706.7M929.5 708V706.1M930.5 708V705M931.5 708V707.1M932.5 708V699M933.5 708V705.9M934.5 708V707.2M935.5 708V706.9M936.5 708V707.3M937.5 708V702M938.5 708V707.2M939.5 708V707.1M940.5 708V706.3M941.5 708V707M942.5 708V704.9M943.5 708V704.6M944.5 708V706.2M945.5 708V700M946.5 708V703.9M947.5 708V707M948.5 708V706.7M949.5 708V706.2M950.5 708V705.7M951.5 708V706.7M952.5 708V706.4M953.5 708V705.5M954.5 708V706.2M955.5 708V700M956.5 708V705.5M957.5 708V706.4M958.5 708V700M959.5 708V705.4M960.5 708V705.8M961.5 708V706.2M962.5 708V703.1M963.5 708V703.5M964.5 708V704.8M965.5 708V706.3M966.5 708V702.1M967.5 708V706.6" stroke="url(#g8)" stroke-width="1" fill="none" shape-rendering="crispEdges"/>
<path d="M962.5 649V708M965.5 708V716M966.5 700V712" stroke="#2323cc" stroke-width="1.0" fill="none" opacity="0.85"/>
<line x1="3" y1="825.5" x2="1751" y2="825.5" stroke="#e040a0" stroke-width="1.1"/>
<polyline points="3,931.8 177.7,931.8 177.7,895.4" fill="none" stroke="#00dc96" stroke-width="1.7"/>
<line x1="177" y1="895.4" x2="1751" y2="895.4" stroke="#00dc96" stroke-width="1.3"/>
<path d="M178.6 889V905M179.6 892V900M180.6 893V898M185.8 889V902M186.7 883V911M187.6 888V903M188.6 892V899M190 892V899M191 889V903M192 886V905M193 891V900M965.5 880V912M964.6 889V902M966.4 891V900" stroke="#00dc96" stroke-width="1.0" fill="none" opacity="0.8"/>
<line x1="-4" y1="114.5" x2="1721" y2="114.5" stroke="#c0c0c0" stroke-width="1" stroke-dasharray="5 5" shape-rendering="crispEdges"/>
<line x1="-4" y1="241.5" x2="1751" y2="241.5" stroke="#c0c0c0" stroke-width="1" stroke-dasharray="5 5" shape-rendering="crispEdges"/>
<line x1="-4" y1="335.5" x2="1751" y2="335.5" stroke="#c0c0c0" stroke-width="1" stroke-dasharray="5 5" shape-rendering="crispEdges"/>
<line x1="-4" y1="417.5" x2="1751" y2="417.5" stroke="#c0c0c0" stroke-width="1" stroke-dasharray="5 5" shape-rendering="crispEdges"/>
<line x1="-4" y1="592.5" x2="1751" y2="592.5" stroke="#c0c0c0" stroke-width="1" stroke-dasharray="5 5" shape-rendering="crispEdges"/>
<line x1="-4" y1="709.5" x2="1751" y2="709.5" stroke="#c0c0c0" stroke-width="1" stroke-dasharray="5 5" shape-rendering="crispEdges"/>
<line x1="-4" y1="826.5" x2="1751" y2="826.5" stroke="#c0c0c0" stroke-width="1" stroke-dasharray="5 5" shape-rendering="crispEdges"/>
<line x1="-4" y1="933.5" x2="1721" y2="933.5" stroke="#c0c0c0" stroke-width="1" stroke-dasharray="5 5" shape-rendering="crispEdges"/>
<line x1="178.5" y1="64" x2="178.5" y2="976" stroke="#c0c0c0" stroke-width="1" stroke-dasharray="6 4" shape-rendering="crispEdges"/>
<g font-family='Liberation Sans, sans-serif' font-size="13">
<text x="1745.5" y="95.9" text-anchor="end" fill="#f5e616">2 V</text>
<text x="1745.5" y="119.1" text-anchor="end" fill="#f5e616">0 V</text>
<text x="1745.5" y="142.3" text-anchor="end" fill="#f5e616">-2 V</text>
<text x="1745.5" y="165.5" text-anchor="end" fill="#f5e616">-4 V</text>
<text x="1745.5" y="187.1" text-anchor="end" fill="#22c5d0">1 V</text>
<text x="1745.5" y="210.3" text-anchor="end" fill="#22c5d0">600 mV</text>
<text x="1745.5" y="233.5" text-anchor="end" fill="#22c5d0">200 mV</text>
<text x="1745.5" y="256.7" text-anchor="end" fill="#22c5d0">-200 mV</text>
<text x="1745.5" y="279.9" text-anchor="end" fill="#22c5d0">-600 mV</text>
<text x="1745.5" y="304.5" text-anchor="end" fill="#e8254e">150 mV</text>
<text x="1745.5" y="327.7" text-anchor="end" fill="#e8254e">50 mV</text>
<text x="1745.5" y="350.9" text-anchor="end" fill="#e8254e">-50 mV</text>
<text x="1745.5" y="374.1" text-anchor="end" fill="#e8254e">-150 mV</text>
<text x="1745.5" y="397.3" text-anchor="end" fill="#e8254e">-250 mV</text>
<text x="1745.5" y="422.2" text-anchor="end" fill="#8cc820">0 V</text>
<text x="1745.5" y="445.4" text-anchor="end" fill="#8cc820">-100 mV</text>
<text x="1745.5" y="468.6" text-anchor="end" fill="#8cc820">-200 mV</text>
<text x="1745.5" y="491.8" text-anchor="end" fill="#8cc820">-300 mV</text>
<text x="1745.5" y="515" text-anchor="end" fill="#8cc820">-400 mV</text>
<text x="1745.5" y="538.6" text-anchor="end" fill="#ff8c1e">1 V</text>
<text x="1745.5" y="561.8" text-anchor="end" fill="#ff8c1e">600 mV</text>
<text x="1745.5" y="585" text-anchor="end" fill="#ff8c1e">200 mV</text>
<text x="1745.5" y="608.2" text-anchor="end" fill="#ff8c1e">-200 mV</text>
<text x="1745.5" y="631.4" text-anchor="end" fill="#ff8c1e">-600 mV</text>
<text x="1745.5" y="655.2" text-anchor="end" fill="#2323cc">1 V</text>
<text x="1745.5" y="678.4" text-anchor="end" fill="#2323cc">600 mV</text>
<text x="1745.5" y="701.6" text-anchor="end" fill="#2323cc">200 mV</text>
<text x="1745.5" y="724.8" text-anchor="end" fill="#2323cc">-200 mV</text>
<text x="1745.5" y="748" text-anchor="end" fill="#2323cc">-600 mV</text>
<text x="1745.5" y="772.4" text-anchor="end" fill="#e040a0">1 V</text>
<text x="1745.5" y="795.6" text-anchor="end" fill="#e040a0">600 mV</text>
<text x="1745.5" y="818.8" text-anchor="end" fill="#e040a0">200 mV</text>
<text x="1745.5" y="842" text-anchor="end" fill="#e040a0">-200 mV</text>
<text x="1745.5" y="865.2" text-anchor="end" fill="#e040a0">-600 mV</text>
<text x="1745.5" y="889" text-anchor="end" fill="#00dc96">8 V</text>
<text x="1745.5" y="913" text-anchor="end" fill="#00dc96">4 V</text>
<text x="1745.5" y="936.9" text-anchor="end" fill="#00dc96">0 V</text>
<text x="1745.5" y="960.8" text-anchor="end" fill="#00dc96">-4 V</text>
<text x="1745.5" y="984.8" text-anchor="end" fill="#00dc96">-8 V</text>
</g>
<g font-family="Liberation Sans, sans-serif" font-size="13" fill="#b4b4b4" text-anchor="middle">
<text x="178.5" y="986">0 s</text>
<text x="353.2" y="986">5 ms</text>
<text x="527.9" y="986">10 ms</text>
<text x="702.6" y="986">15 ms</text>
<text x="877.3" y="986">20 ms</text>
<text x="1052" y="986">25 ms</text>
<text x="1226.7" y="986">30 ms</text>
<text x="1401.4" y="986">35 ms</text>
<text x="1576.1" y="986">40 ms</text>
</g>
<path d="M8.5 100 H29 L41.5 112.4 L29 124.8 H8.5 Q6.5 124.8 6.5 122.8 V102 Q6.5 100 8.5 100 Z" fill="#000"/>
<path d="M8.5 100 H29 L41.5 112.4 L29 124.8 H8.5 Q6.5 124.8 6.5 122.8 V102 Q6.5 100 8.5 100 Z" fill="rgba(245,230,22,0.12)" stroke="#f5e616" stroke-width="1.25" stroke-linejoin="round"/>
<text x="15" y="115.9" font-family="Liberation Sans, sans-serif" font-size="11.5" fill="#f5e616" textLength="17.5" lengthAdjust="spacing">C 1</text>
<text x="53.5" y="116.7" font-family="Liberation Sans, sans-serif" font-size="18.6" fill="#f5e616" textLength="60" lengthAdjust="spacingAndGlyphs">LYSO-6</text>
<path d="M8.5 216.5 H29 L41.5 228.9 L29 241.3 H8.5 Q6.5 241.3 6.5 239.3 V218.5 Q6.5 216.5 8.5 216.5 Z" fill="#000"/>
<path d="M8.5 216.5 H29 L41.5 228.9 L29 241.3 H8.5 Q6.5 241.3 6.5 239.3 V218.5 Q6.5 216.5 8.5 216.5 Z" fill="rgba(34,197,208,0.12)" stroke="#22c5d0" stroke-width="1.25" stroke-linejoin="round"/>
<text x="15" y="232.4" font-family="Liberation Sans, sans-serif" font-size="11.5" fill="#22c5d0" textLength="17.5" lengthAdjust="spacing">C 2</text>
<text x="53.5" y="233.2" font-family="Liberation Sans, sans-serif" font-size="18.6" fill="#22c5d0" textLength="60" lengthAdjust="spacingAndGlyphs">LYSO-7</text>
<path d="M8.5 333.5 H29 L41.5 345.9 L29 358.3 H8.5 Q6.5 358.3 6.5 356.3 V335.5 Q6.5 333.5 8.5 333.5 Z" fill="#000"/>
<path d="M8.5 333.5 H29 L41.5 345.9 L29 358.3 H8.5 Q6.5 358.3 6.5 356.3 V335.5 Q6.5 333.5 8.5 333.5 Z" fill="rgba(238,74,106,0.12)" stroke="#ee4a6a" stroke-width="1.25" stroke-linejoin="round"/>
<text x="15" y="349.4" font-family="Liberation Sans, sans-serif" font-size="11.5" fill="#ee4a6a" textLength="17.5" lengthAdjust="spacing">C 3</text>
<text x="53.5" y="350.2" font-family="Liberation Sans, sans-serif" font-size="18.6" fill="#ee4a6a" textLength="56" lengthAdjust="spacingAndGlyphs">CeBr-a</text>
<path d="M8.5 450.5 H29 L41.5 462.9 L29 475.3 H8.5 Q6.5 475.3 6.5 473.3 V452.5 Q6.5 450.5 8.5 450.5 Z" fill="#000"/>
<path d="M8.5 450.5 H29 L41.5 462.9 L29 475.3 H8.5 Q6.5 475.3 6.5 473.3 V452.5 Q6.5 450.5 8.5 450.5 Z" fill="rgba(140,200,32,0.12)" stroke="#8cc820" stroke-width="1.25" stroke-linejoin="round"/>
<text x="15" y="466.4" font-family="Liberation Sans, sans-serif" font-size="11.5" fill="#8cc820" textLength="17.5" lengthAdjust="spacing">C 4</text>
<text x="53.5" y="467.2" font-family="Liberation Sans, sans-serif" font-size="18.6" fill="#8cc820" textLength="61.7" lengthAdjust="spacingAndGlyphs">CebR-b</text>
<path d="M8.5 567.5 H29 L41.5 579.9 L29 592.3 H8.5 Q6.5 592.3 6.5 590.3 V569.5 Q6.5 567.5 8.5 567.5 Z" fill="#000"/>
<path d="M8.5 567.5 H29 L41.5 579.9 L29 592.3 H8.5 Q6.5 592.3 6.5 590.3 V569.5 Q6.5 567.5 8.5 567.5 Z" fill="rgba(255,148,40,0.12)" stroke="#ff9428" stroke-width="1.25" stroke-linejoin="round"/>
<text x="15" y="583.4" font-family="Liberation Sans, sans-serif" font-size="11.5" fill="#ff9428" textLength="17.5" lengthAdjust="spacing">C 5</text>
<text x="53.5" y="584.2" font-family="Liberation Sans, sans-serif" font-size="18.6" fill="#ff9428" textLength="60" lengthAdjust="spacingAndGlyphs">LYSO-3</text>
<path d="M8.5 684.5 H29 L41.5 696.9 L29 709.3 H8.5 Q6.5 709.3 6.5 707.3 V686.5 Q6.5 684.5 8.5 684.5 Z" fill="#000"/>
<path d="M8.5 684.5 H29 L41.5 696.9 L29 709.3 H8.5 Q6.5 709.3 6.5 707.3 V686.5 Q6.5 684.5 8.5 684.5 Z" fill="rgba(42,42,216,0.12)" stroke="#2a2ad8" stroke-width="1.25" stroke-linejoin="round"/>
<text x="15" y="700.4" font-family="Liberation Sans, sans-serif" font-size="11.5" fill="#2a2ad8" textLength="17.5" lengthAdjust="spacing">C 6</text>
<text x="53.5" y="701.2" font-family="Liberation Sans, sans-serif" font-size="18.6" fill="#2a2ad8" textLength="58.6" lengthAdjust="spacingAndGlyphs">LYSO-1</text>
<path d="M8.5 801.5 H29 L41.5 813.9 L29 826.3 H8.5 Q6.5 826.3 6.5 824.3 V803.5 Q6.5 801.5 8.5 801.5 Z" fill="#000"/>
<path d="M8.5 801.5 H29 L41.5 813.9 L29 826.3 H8.5 Q6.5 826.3 6.5 824.3 V803.5 Q6.5 801.5 8.5 801.5 Z" fill="rgba(232,72,168,0.12)" stroke="#e848a8" stroke-width="1.25" stroke-linejoin="round"/>
<text x="15" y="817.4" font-family="Liberation Sans, sans-serif" font-size="11.5" fill="#e848a8" textLength="17.5" lengthAdjust="spacing">C 7</text>
<text x="53.5" y="818.2" font-family="Liberation Sans, sans-serif" font-size="18.6" fill="#e848a8" textLength="60" lengthAdjust="spacingAndGlyphs">LYSO-5</text>
<path d="M8.5 919.9 H29 L41.5 932.3 L29 944.7 H8.5 Q6.5 944.7 6.5 942.7 V921.9 Q6.5 919.9 8.5 919.9 Z" fill="#000"/>
<path d="M8.5 919.9 H29 L41.5 932.3 L29 944.7 H8.5 Q6.5 944.7 6.5 942.7 V921.9 Q6.5 919.9 8.5 919.9 Z" fill="#00dc96" stroke="#00dc96" stroke-width="0.3" stroke-linejoin="round"/>
<text x="15" y="935.8" font-family="Liberation Sans, sans-serif" font-size="11.5" fill="#10241c" textLength="17.5" lengthAdjust="spacing">C 8</text>
<text x="53.5" y="936.6" font-family="Liberation Sans, sans-serif" font-size="18.6" fill="#00dc96" textLength="62" lengthAdjust="spacingAndGlyphs">Trigger</text>
<polygon points="168,54 188.5,54 178.3,64" fill="#f5861f"/>
<path d="M169 874 H187 V893 H182 L178 899.5 L174 893 H169 Z" fill="#000" stroke="#f5861f" stroke-width="2"/>
<text x="177.7" y="887.9" font-family="Liberation Sans, sans-serif" font-size="14.8" font-weight="bold" fill="#f5861f" text-anchor="middle">T</text>
<polygon points="1729.8,908.5 1741.8,898.6 1741.8,906.7 1751,906.7 1751,910.3 1741.8,910.3 1741.8,918.4" fill="#00dc96"/>
<polygon points="1709.5,61 1742,61 1744,63 1744,94.5" fill="#555"/>
<circle cx="1737.5" cy="68" r="3.8" fill="none" stroke="#aaa" stroke-width="1.5"/><line x1="1734.7" y1="71" x2="1727.5" y2="78" stroke="#aaa" stroke-width="2.2" stroke-linecap="round"/>
</g>
</svg>
<div id="side" class="abs"></div>
<div class="abs" style="left:1919px;top:995px;width:1px;height:85px;background:#8c8c8c"></div>
<svg class="abs" style="left:1758px;top:496px" width="8" height="28" viewBox="0 0 8 28"><circle cx="4" cy="5.7" r="1.9" fill="#c4c4c4"/><circle cx="4" cy="14.3" r="1.9" fill="#c4c4c4"/><circle cx="4" cy="22.9" r="1.9" fill="#c4c4c4"/></svg>
<div class="abs" style="left:1770px;top:27px;width:149px;text-align:center;font-weight:bold;font-size:14.5px;color:#f0f0f0;letter-spacing:.3px">Add New...</div>
<div class="btn" style="left:1777px;top:53px;width:63px;height:37px;line-height:34px">Cursors</div>
<div class="btn" style="left:1849px;top:53px;width:63px;height:37px;line-height:34px;letter-spacing:.5px">Note</div>
<div class="btn" style="left:1777px;top:99px;width:63px;height:37px;line-height:34px;letter-spacing:.45px">Measure</div>
<div class="btn" style="left:1849px;top:99px;width:63px;height:37px;line-height:34px">Search</div>
<div class="btn" style="left:1777px;top:145px;width:63px;height:37px;line-height:16px;padding-top:1px">Results<br>Table</div>
<div class="btn" style="left:1849px;top:145px;width:63px;height:37px;line-height:34px;letter-spacing:.7px">Plot</div>
<div class="sep" style="top:190px"></div>
<div class="sep" style="top:943px"></div>
<div class="btn" style="left:1776px;top:952px;width:63px;height:37px"></div>
<svg class="abs" style="left:1776px;top:952px" width="144" height="40" viewBox="1776 952 144 40">
<path d="M1795.5 958.5h15M1795.5 958.5v14" stroke="#bbb" stroke-width="1.6" stroke-dasharray="1.6 2.4" fill="none"/><path d="M1811 959v3" stroke="#bbb" stroke-width="1.6"/><path d="M1796 972.5h4" stroke="#bbb" stroke-width="1.6"/>
<circle cx="1808" cy="972.5" r="4.6" fill="#777" stroke="#ccc" stroke-width="1.5"/><line x1="1811.5" y1="976.3" x2="1817.5" y2="982.5" stroke="#ccc" stroke-width="2.6" stroke-linecap="round"/>
<g fill="none" stroke="#cfcfcf" stroke-width="1.3"><ellipse cx="1882.5" cy="959.5" rx="12.5" ry="3.6"/><path d="M1870 960.5 L1872.5 983.5 Q1882.5 988 1892.5 983.5 L1895 960.5"/><path d="M1870.3 963.5 Q1882.5 968.5 1894.7 963.5"/><path d="M1876.5 967.5L1877.8 984.8M1882.5 968V985.5M1888.5 967.5L1887.2 984.8"/><path d="M1878 956.2Q1882.5 954.2 1887 956.2"/></g>
</svg>
<div class="chb" style="left:3px"><div class="chh" style="background:#4a4520;color:#f5e616">Ch 1</div><div class="r r1">1 V/div</div><div class="r r2">50 Ω</div><div class="r r3">100 MHz</div><div class="bw">B<span>w</span></div></div>
<div class="chb" style="left:98px"><div class="chh" style="background:#1f4145;color:#22c5d0">Ch 2</div><div class="r r1">200 mV/div</div><div class="r r2">50 Ω</div><div class="r r3">100 MHz</div><div class="bw">B<span>w</span></div></div>
<div class="chb" style="left:193px"><div class="chh" style="background:#4a262c;color:#e8305a">Ch 3</div><div class="r r1">50 mV/div</div><div class="r r2">50 Ω</div><div class="r r3">100 MHz</div><div class="bw">B<span>w</span></div></div>
<div class="chb" style="left:288px"><div class="chh" style="background:#34431f;color:#8cc820">Ch 4</div><div class="r r1">50 mV/div</div><div class="r r2">50 Ω</div><div class="r r3">100 MHz</div><div class="bw">B<span>w</span></div></div>
<div class="chb" style="left:383px"><div class="chh" style="background:#4f3a1f;color:#ff8c1e">Ch 5</div><div class="r r1">200 mV/div</div><div class="r r2">50 Ω</div><div class="r r3">100 MHz</div><div class="bw">B<span>w</span></div></div>
<div class="chb" style="left:478px"><div class="chh" style="background:#20203f;color:#2a2ad0">Ch 6</div><div class="r r1">200 mV/div</div><div class="r r2">50 Ω</div><div class="r r3">100 MHz</div><div class="bw">B<span>w</span></div></div>
<div class="chb" style="left:573px"><div class="chh" style="background:#46263b;color:#e848a8">Ch 7</div><div class="r r1">200 mV/div</div><div class="r r2">50 Ω</div><div class="r r3">100 MHz</div><div class="bw">B<span>w</span></div></div>
<div class="chb" style="left:668px"><div class="chh" style="background:#00dc96;color:#000000">Ch 8</div><div class="r r1">2 V/div</div><div class="r r2">1 MΩ</div><div class="r r3">100 MHz</div><div class="bw">B<span>w</span></div></div>
<div class="vsep" style="left:1119px"></div><div class="vsep" style="left:1270px"></div>
<div class="addb" style="left:1130px"><i style="background:#f5861f"></i>Add<br>New<br>Math</div>
<div class="addb" style="left:1175px"><i style="background:#c9c9d6"></i>Add<br>New<br>Ref</div>
<div class="addb" style="left:1220px"><i style="background:#c050f0"></i>Add<br>New<br>Bus</div>
<div class="pan" style="left:1281px;width:200px"><div class="ph">Horizontal</div>
<div class="t" style="left:7.5px;top:24px">5 ms/div</div><div class="t" style="left:7.5px;top:43px;letter-spacing:-.4px">SR: 250 MS/s</div><div class="t" style="left:7.5px;top:62px;letter-spacing:.1px">RL: 12.5 Mpts</div>
<div class="t" style="left:113.5px;top:24px">50 ms</div><div class="t" style="left:113.5px;top:43px">4 ns/pt</div><div class="t" style="left:128px;top:62px">10%</div>
<svg style="position:absolute;left:112px;top:62px" width="12" height="14" viewBox="0 0 12 14"><path d="M1.6 1.2H9.6V8.6H7.4L5.6 12.2L3.8 8.6H1.6Z" fill="#111" stroke="#f5861f" stroke-width="1.3"/><text x="5.6" y="7.6" font-family="Liberation Sans, sans-serif" font-size="6.5" font-weight="bold" fill="#fff" text-anchor="middle">T</text></svg>
</div>
<div class="pan" style="left:1491px;width:160px"><div class="ph">Trigger</div>
<div class="t" style="left:7px;top:24px;width:29px;height:16.5px;box-sizing:border-box;border:1px solid #111;border-radius:5px;background:#00dc96;text-align:center;line-height:15px">8</div>
<svg style="position:absolute;left:46px;top:26px" width="18" height="13" viewBox="0 0 18 13"><path d="M1 11.5H5.5L11.5 1.5H17" fill="none" stroke="#3c3c96" stroke-width="1.1"/></svg>
<div class="t" style="left:73px;top:24px">4 V</div></div>
<div class="pan" style="left:1661px;width:150px"><div class="ph">Acquisition</div>
<div class="t" style="left:7.5px;top:24px">Manual,</div><div class="t" style="left:86px;top:24px">Analyze</div><div class="t" style="left:7.5px;top:43px">High Res: 15 bits</div><div class="t" style="left:7.5px;top:62px">Single: 1 /1</div></div>
<div class="abs" style="left:1821px;top:998.5px;width:90px;height:35.5px;background:#ff1c25;border-radius:5px;color:#fff;font-weight:bold;font-size:13px;text-align:center;line-height:31px;box-shadow:0 0 0 1px #5a3030">Stopped</div>
<div class="abs" style="left:1821px;top:1042px;width:90px;height:36px;background:#cacaca;border-radius:4px;color:#111;font-size:15px;text-align:center;line-height:17px;padding-top:1px;box-sizing:border-box;letter-spacing:0;white-space:nowrap">28 May 2025<br>16:19:56</div>
</body></html>
